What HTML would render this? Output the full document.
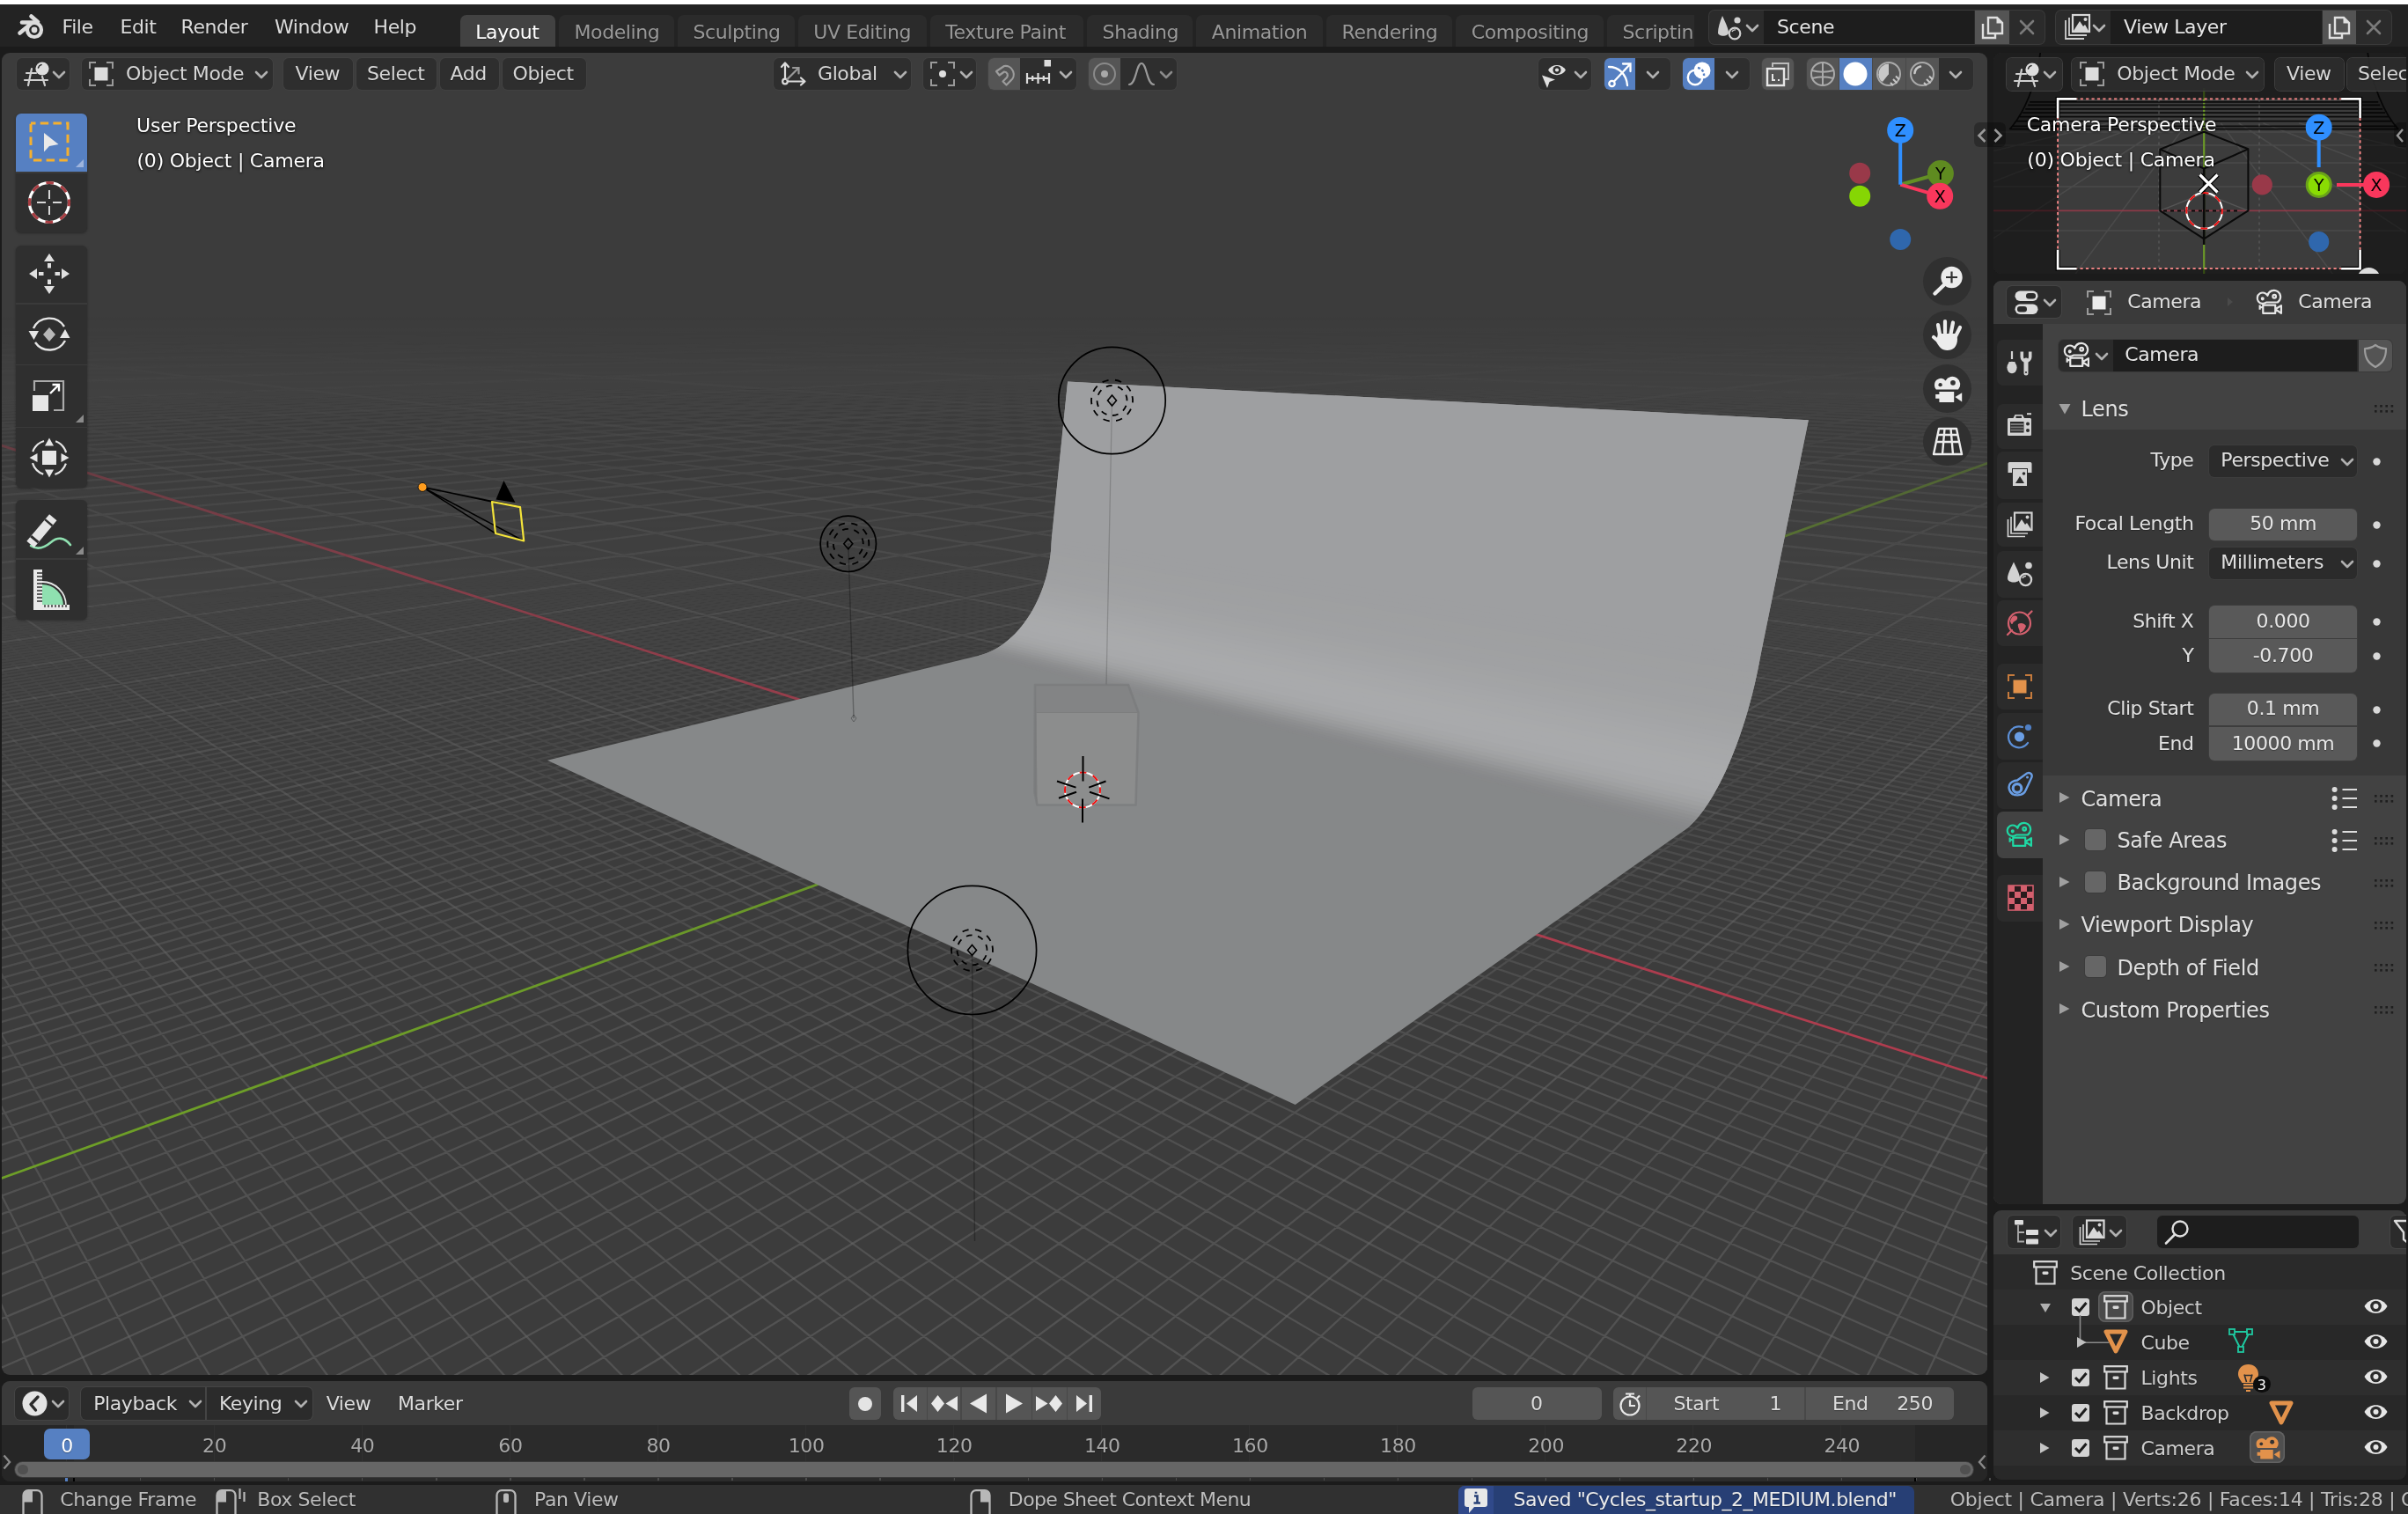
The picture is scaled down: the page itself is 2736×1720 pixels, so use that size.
<!DOCTYPE html>
<html lang="en"><head><meta charset="utf-8"><title>Blender</title>
<style>
html,body{margin:0;padding:0;}
body{width:2736px;height:1720px;overflow:hidden;background:#1b1b1b;position:relative;
 font-family:"DejaVu Sans","Liberation Sans",sans-serif;font-size:22px;letter-spacing:-0.4px;color:#d9d9d9;}
#root{position:absolute;left:0;top:0;width:2736px;height:1720px;overflow:hidden;will-change:transform;transform:translateZ(0);}
.a{position:absolute;}
.t{position:absolute;white-space:nowrap;line-height:26px;text-shadow:0 1px 1px rgba(0,0,0,.35);}
.btn{position:absolute;background:#2d2d2d;border-radius:6px;box-shadow:0 0 0 1px rgba(62,62,62,.9);}
svg{position:absolute;overflow:visible;}
</style>
</head>
<body>
<div id="root">
<div class="a" style="left:0.0px;top:0.0px;width:2736.0px;height:5.0px;background:#ffffff;"></div>
<div class="a" style="left:0.0px;top:5.0px;width:2736.0px;height:48.0px;background:#232323;"></div>
<svg style="left:19.0px;top:15.0px;" width="32" height="32"><g fill="none" stroke="#dcdcdc" stroke-linecap="round">
<path d="M3.5 22.5 L15 13" stroke-width="4.6"/><path d="M6 10.5 L19 10.5" stroke-width="4.6"/><path d="M16.5 3.5 L24 10" stroke-width="4.6"/>
<circle cx="20" cy="19" r="8" stroke-width="4.2"/></g><circle cx="20" cy="19" r="3.4" fill="#dcdcdc"/></svg>
<div class="t" style="left:70.5px;top:17.7px;color:#dcdcdc;">File</div>
<div class="t" style="left:136.5px;top:17.7px;color:#dcdcdc;">Edit</div>
<div class="t" style="left:205.5px;top:17.7px;color:#dcdcdc;">Render</div>
<div class="t" style="left:312.0px;top:17.7px;color:#dcdcdc;">Window</div>
<div class="t" style="left:424.5px;top:17.7px;color:#dcdcdc;">Help</div>
<div class="a" style="left:0;top:5px;width:1925px;height:48px;overflow:hidden">
<div class="a" style="left:522.7px;top:12.0px;width:108.6px;height:36.0px;background:#424242;border-radius:7px 7px 0 0;"></div>
<div class="t" style="left:540.2px;top:19.0px;color:#ffffff;">Layout</div>
<div class="a" style="left:635.0px;top:12.0px;width:131.2px;height:36.0px;background:#2b2b2b;border-radius:7px 7px 0 0;"></div>
<div class="t" style="left:652.5px;top:19.0px;color:#989898;">Modeling</div>
<div class="a" style="left:769.9px;top:12.0px;width:132.9px;height:36.0px;background:#2b2b2b;border-radius:7px 7px 0 0;"></div>
<div class="t" style="left:787.4px;top:19.0px;color:#989898;">Sculpting</div>
<div class="a" style="left:906.8px;top:12.0px;width:146.2px;height:36.0px;background:#2b2b2b;border-radius:7px 7px 0 0;"></div>
<div class="t" style="left:924.3px;top:19.0px;color:#989898;">UV Editing</div>
<div class="a" style="left:1056.8px;top:12.0px;width:174.1px;height:36.0px;background:#2b2b2b;border-radius:7px 7px 0 0;"></div>
<div class="t" style="left:1074.3px;top:19.0px;color:#989898;">Texture Paint</div>
<div class="a" style="left:1235.1px;top:12.0px;width:120.2px;height:36.0px;background:#2b2b2b;border-radius:7px 7px 0 0;"></div>
<div class="t" style="left:1252.6px;top:19.0px;color:#989898;">Shading</div>
<div class="a" style="left:1359.3px;top:12.0px;width:143.5px;height:36.0px;background:#2b2b2b;border-radius:7px 7px 0 0;"></div>
<div class="t" style="left:1376.8px;top:19.0px;color:#989898;">Animation</div>
<div class="a" style="left:1507.0px;top:12.0px;width:142.9px;height:36.0px;background:#2b2b2b;border-radius:7px 7px 0 0;"></div>
<div class="t" style="left:1524.5px;top:19.0px;color:#989898;">Rendering</div>
<div class="a" style="left:1654.2px;top:12.0px;width:167.6px;height:36.0px;background:#2b2b2b;border-radius:7px 7px 0 0;"></div>
<div class="t" style="left:1671.7px;top:19.0px;color:#989898;">Compositing</div>
<div class="a" style="left:1826.0px;top:12.0px;width:134.0px;height:36.0px;background:#2b2b2b;border-radius:7px 7px 0 0;"></div>
<div class="t" style="left:1843.5px;top:19.0px;color:#989898;">Scripting</div>
</div>
<div class="a" style="left:1942.0px;top:12.0px;width:381.0px;height:37.5px;background:#2b2b2b;border-radius:6px;box-shadow:0 0 0 1px #3a3a3a;"></div>
<div class="a" style="left:2004.0px;top:12.0px;width:239.0px;height:37.5px;background:#1d1d1d;"></div>
<div class="a" style="left:2244.0px;top:12.0px;width:39.3px;height:37.5px;background:#545454;"></div>
<div class="t" style="left:2019.0px;top:18.2px;color:#e6e6e6;">Scene</div>
<svg style="left:1948.0px;top:15.0px;" width="32" height="32"><path d="M9 3 C12 10 16 17 16 22 C16 27 4 27 4 22 C4 17 6 10 9 3Z" fill="#d0d0d0"/><circle cx="26" cy="8" r="3.6" fill="#d0d0d0"/><circle cx="23" cy="23" r="6.3" fill="#2b2b2b" stroke="#d0d0d0" stroke-width="2.2"/><path d="M20 21 A3.5 3.5 0 0 1 24 19" stroke="#d0d0d0" stroke-width="1.4" fill="none"/></svg>
<svg style="left:1983.0px;top:26.5px;" width="16" height="10"><path d="M2 2 L8.0 8 L14 2" fill="none" stroke="#b5b5b5" stroke-width="2.6" stroke-linecap="round" stroke-linejoin="round"/></svg>
<svg style="left:2249.7px;top:17.0px;" width="28" height="28"><path d="M3 10 V26 H17 V22" fill="none" stroke="#e0e0e0" stroke-width="2.4"/><path d="M9 3 H19 L25 9 V21 H9 Z" fill="none" stroke="#e0e0e0" stroke-width="2.4"/><path d="M18.5 2.5 V9.5 H25.5 Z" fill="#e0e0e0"/></svg>
<svg style="left:2295.2px;top:23.0px;" width="16" height="16"><path d="M1 1 L15 15 M15 1 L1 15" stroke="#7a7a7a" stroke-width="2.6" stroke-linecap="round"/></svg>
<div class="a" style="left:2335.6px;top:12.0px;width:381.4px;height:37.5px;background:#2b2b2b;border-radius:6px;box-shadow:0 0 0 1px #3a3a3a;"></div>
<div class="a" style="left:2398.0px;top:12.0px;width:239.7px;height:37.5px;background:#1d1d1d;"></div>
<div class="a" style="left:2638.7px;top:12.0px;width:37.9px;height:37.5px;background:#545454;"></div>
<div class="t" style="left:2413.0px;top:18.2px;color:#e6e6e6;">View Layer</div>
<svg style="left:2343.0px;top:15.0px;" width="32" height="32"><path d="M4 8 V29 H25" fill="none" stroke="#cfcfcf" stroke-width="1.8"/><path d="M8 5 V25 H28" fill="none" stroke="#cfcfcf" stroke-width="1.8"/><rect x="12" y="2" width="19" height="19" fill="none" stroke="#d8d8d8" stroke-width="2.2"/><path d="M13 20 L20 9 L24 15 L26 13 L30 20Z" fill="#d8d8d8"/><circle cx="26.5" cy="7" r="2" fill="#d8d8d8"/></svg>
<svg style="left:2377.0px;top:26.5px;" width="16" height="10"><path d="M2 2 L8.0 8 L14 2" fill="none" stroke="#b5b5b5" stroke-width="2.6" stroke-linecap="round" stroke-linejoin="round"/></svg>
<svg style="left:2643.6px;top:17.0px;" width="28" height="28"><path d="M3 10 V26 H17 V22" fill="none" stroke="#e0e0e0" stroke-width="2.4"/><path d="M9 3 H19 L25 9 V21 H9 Z" fill="none" stroke="#e0e0e0" stroke-width="2.4"/><path d="M18.5 2.5 V9.5 H25.5 Z" fill="#e0e0e0"/></svg>
<svg style="left:2688.8px;top:23.0px;" width="16" height="16"><path d="M1 1 L15 15 M15 1 L1 15" stroke="#7a7a7a" stroke-width="2.6" stroke-linecap="round"/></svg>
<div class="a" style="left:2px;top:60px;width:2256px;height:1502px;border-radius:9px;overflow:hidden;background:#3c3c3c;">
<svg style="left:-2px;top:-60px" width="2736" height="1720" viewBox="0 0 2736 1720"><defs><linearGradient id="g0" gradientUnits="userSpaceOnUse" x1="0" y1="344" x2="0" y2="1570"><stop offset="0.0000" stop-color="#fff" stop-opacity="0.000"/><stop offset="0.0457" stop-color="#fff" stop-opacity="0.000"/><stop offset="0.0620" stop-color="#fff" stop-opacity="0.000"/><stop offset="0.0865" stop-color="#fff" stop-opacity="0.000"/><stop offset="0.1109" stop-color="#fff" stop-opacity="0.004"/><stop offset="0.1436" stop-color="#fff" stop-opacity="0.026"/><stop offset="0.1762" stop-color="#fff" stop-opacity="0.061"/><stop offset="0.2088" stop-color="#fff" stop-opacity="0.105"/><stop offset="0.2577" stop-color="#fff" stop-opacity="0.176"/><stop offset="0.3067" stop-color="#fff" stop-opacity="0.248"/><stop offset="0.3719" stop-color="#fff" stop-opacity="0.339"/><stop offset="0.4535" stop-color="#fff" stop-opacity="0.439"/><stop offset="0.5351" stop-color="#fff" stop-opacity="0.522"/><stop offset="0.6574" stop-color="#fff" stop-opacity="0.617"/><stop offset="0.7798" stop-color="#fff" stop-opacity="0.685"/><stop offset="0.9021" stop-color="#fff" stop-opacity="0.733"/><stop offset="1.0000" stop-color="#fff" stop-opacity="0.762"/></linearGradient><linearGradient id="g1" gradientUnits="userSpaceOnUse" x1="0" y1="344" x2="0" y2="1570"><stop offset="0.0000" stop-color="#fff" stop-opacity="0.000"/><stop offset="0.0131" stop-color="#fff" stop-opacity="0.002"/><stop offset="0.0294" stop-color="#fff" stop-opacity="0.026"/><stop offset="0.0457" stop-color="#fff" stop-opacity="0.086"/><stop offset="0.0701" stop-color="#fff" stop-opacity="0.189"/><stop offset="0.0946" stop-color="#fff" stop-opacity="0.249"/><stop offset="0.1272" stop-color="#fff" stop-opacity="0.324"/><stop offset="0.1680" stop-color="#fff" stop-opacity="0.411"/><stop offset="0.2088" stop-color="#fff" stop-opacity="0.490"/><stop offset="0.2577" stop-color="#fff" stop-opacity="0.574"/><stop offset="0.3067" stop-color="#fff" stop-opacity="0.647"/><stop offset="0.3719" stop-color="#fff" stop-opacity="0.729"/><stop offset="0.4535" stop-color="#fff" stop-opacity="0.810"/><stop offset="0.5351" stop-color="#fff" stop-opacity="0.869"/><stop offset="0.6574" stop-color="#fff" stop-opacity="0.928"/><stop offset="0.7798" stop-color="#fff" stop-opacity="0.962"/><stop offset="1.0000" stop-color="#fff" stop-opacity="0.989"/></linearGradient><mask id="m0" maskUnits="userSpaceOnUse" x="0" y="340" width="2300" height="1240"><rect x="0" y="340" width="2300" height="1240" fill="url(#g0)"/></mask><mask id="m1" maskUnits="userSpaceOnUse" x="0" y="340" width="2300" height="1240"><rect x="0" y="340" width="2300" height="1240" fill="url(#g1)"/></mask></defs><g mask="url(#m0)"><path d="M-3.0 470.4L5.7 470.0M-3.0 470.7L12.6 470.0M-3.0 471.0L19.5 470.0M-3.0 471.4L26.4 470.0M-3.0 471.7L33.3 470.0M-3.0 472.0L40.2 470.0M-3.0 472.3L47.1 470.0M-3.0 472.6L54.0 470.0M-3.0 473.0L60.9 470.0M-3.0 473.6L74.7 470.0M-3.0 474.0L81.6 470.0M-3.0 474.3L88.5 470.0M-3.0 474.6L95.4 470.0M-3.0 475.0L102.3 470.0M-3.0 475.3L109.2 470.0M-3.0 475.7L116.1 470.0M-3.0 476.0L123.0 470.0M-3.0 476.3L129.9 470.0M-3.0 477.0L143.8 470.0M-3.0 477.4L150.7 470.0M-3.0 477.7L157.6 470.0M-3.0 478.1L164.5 470.0M-3.0 478.5L171.4 470.0M-3.0 478.8L178.3 470.0M-3.0 479.2L185.2 470.0M-3.0 479.5L192.1 470.0M-3.0 479.9L199.0 470.0M-3.0 480.6L212.8 470.0M-3.0 481.0L219.7 470.0M-3.0 481.4L226.6 470.0M-3.0 481.7L233.5 470.0M-3.0 482.1L240.4 470.0M-3.0 482.5L247.3 470.0M-3.0 482.9L254.2 470.0M-3.0 483.3L261.1 470.0M-3.0 483.6L268.0 470.0M-3.0 484.4L281.8 470.0M-3.0 484.8L288.7 470.0M-3.0 485.2L295.6 470.0M-3.0 485.6L302.5 470.0M-3.0 486.0L309.4 470.0M-3.0 486.4L316.3 470.0M-3.0 486.8L323.2 470.0M-3.0 487.2L330.1 470.0M-3.0 487.6L337.0 470.0M-3.0 488.4L350.8 470.0M-3.0 488.8L357.7 470.0M-3.0 489.3L364.6 470.0M-3.0 489.7L371.5 470.0M-3.0 490.1L378.4 470.0M-3.0 490.5L385.3 470.0M-3.0 490.9L392.2 470.0M-3.0 491.4L399.1 470.0M-3.0 491.8L406.0 470.0M-3.0 492.7L419.8 470.0M-3.0 493.1L426.7 470.0M-3.0 493.6L433.6 470.0M-3.0 494.0L440.5 470.0M-3.0 494.4L447.4 470.0M-3.0 494.9L454.3 470.0M-3.0 495.3L461.2 470.0M-3.0 495.8L468.1 470.0M-3.0 496.3L475.0 470.0M-3.0 497.2L488.8 470.0M-3.0 497.6L495.7 470.0M-3.0 498.1L502.6 470.0M-3.0 498.6L509.5 470.0M-3.0 499.1L516.4 470.0M-3.0 499.5L523.3 470.0M-3.0 500.0L530.2 470.0M-3.0 500.5L537.1 470.0M-3.0 501.0L544.0 470.0M-3.0 502.0L557.8 470.0M-3.0 502.5L564.7 470.0M-3.0 503.0L571.6 470.0M-3.0 503.5L578.5 470.0M-3.0 504.0L585.4 470.0M-3.0 504.5L592.3 470.0M-3.0 505.0L599.2 470.0M-3.0 505.5L606.1 470.0M-3.0 506.0L613.0 470.0M-3.0 507.1L626.8 470.0M-3.0 507.6L633.7 470.0M-3.0 508.1L640.6 470.0M-3.0 508.6L647.5 470.0M-3.0 509.2L654.4 470.0M-3.0 509.7L661.3 470.0M-3.0 510.3L668.2 470.0M-3.0 510.8L675.1 470.0M-3.0 511.4L682.0 470.0M-3.0 512.5L695.8 470.0M-3.0 513.0L702.7 470.0M-3.0 513.6L709.7 470.0M-3.0 514.2L716.6 470.0M-3.0 514.8L723.5 470.0M-3.0 515.3L730.4 470.0M-3.0 515.9L737.3 470.0M-3.0 516.5L744.2 470.0M-3.0 517.1L751.1 470.0M-3.0 518.3L764.9 470.0M-3.0 518.9L771.8 470.0M-3.0 519.5L778.7 470.0M-3.0 520.1L785.6 470.0M-3.0 520.7L792.5 470.0M-3.0 521.3L799.4 470.0M-3.0 522.0L806.3 470.0M-3.0 522.6L813.2 470.0M-3.0 523.2L820.1 470.0M-3.0 524.5L833.9 470.0M-3.0 525.2L840.8 470.0M-3.0 525.8L847.7 470.0M-3.0 526.5L854.6 470.0M-3.0 527.1L861.5 470.0M-3.0 527.8L868.4 470.0M-3.0 528.5L875.3 470.0M-3.0 529.1L882.2 470.0M-3.0 529.8L889.1 470.0M-3.0 531.2L902.9 470.0M-3.0 531.9L909.8 470.0M-3.0 532.6L916.7 470.0M-3.0 533.3L923.6 470.0M-3.0 534.0L930.5 470.0M-3.0 534.7L937.4 470.0M-3.0 535.5L944.3 470.0M-3.0 536.2L951.2 470.0M-3.0 536.9L958.1 470.0M-3.0 538.4L971.9 470.0M-3.0 539.1L978.8 470.0M-3.0 539.9L985.7 470.0M-3.0 540.7L992.6 470.0M-3.0 541.4L999.5 470.0M-3.0 542.2L1006.4 470.0M-3.0 543.0L1013.3 470.0M-3.0 543.8L1020.2 470.0M-3.0 544.6L1027.1 470.0M-3.0 546.2L1040.9 470.0M-3.0 547.0L1047.8 470.0M-3.0 547.8L1054.7 470.0M-3.0 548.6L1061.6 470.0M-3.0 549.5L1068.5 470.0M-3.0 550.3L1075.4 470.0M-3.0 551.1L1082.3 470.0M-3.0 552.0L1089.2 470.0M-3.0 552.9L1096.1 470.0M-3.0 554.6L1109.9 470.0M-3.0 555.5L1116.8 470.0M-3.0 556.4L1123.7 470.0M-3.0 557.3L1130.6 470.0M-3.0 558.2L1137.5 470.0M-3.0 559.1L1144.4 470.0M-3.0 560.0L1151.3 470.0M-3.0 560.9L1158.2 470.0M-3.0 561.9L1165.1 470.0M-3.0 563.8L1178.9 470.0M-3.0 564.7L1185.8 470.0M-3.0 565.7L1192.7 470.0M-3.0 566.7L1199.6 470.0M-3.0 567.6L1206.5 470.0M-3.0 568.6L1213.4 470.0M-3.0 569.6L1220.3 470.0M-3.0 570.7L1227.2 470.0M-3.0 571.7L1234.1 470.0M-3.0 573.7L1247.9 470.0M-3.0 574.8L1254.8 470.0M-3.0 575.9L1261.7 470.0M-3.0 576.9L1268.7 470.0M-3.0 578.0L1275.6 470.0M-3.0 579.1L1282.5 470.0M-3.0 580.2L1289.4 470.0M-3.0 581.3L1296.3 470.0M-3.0 582.4L1303.2 470.0M-3.0 584.7L1317.0 470.0M-3.0 585.8L1323.9 470.0M-3.0 587.0L1330.8 470.0M-3.0 588.2L1337.7 470.0M-3.0 589.4L1344.6 470.0M-3.0 590.6L1351.5 470.0M-3.0 591.8L1358.4 470.0M-3.0 593.0L1365.3 470.0M-3.0 594.2L1372.2 470.0M-3.0 596.7L1386.0 470.0M-3.0 598.0L1392.9 470.0M-3.0 599.3L1399.8 470.0M-3.0 600.6L1406.7 470.0M-3.0 601.9L1413.6 470.0M-3.0 603.2L1420.5 470.0M-3.0 604.6L1427.4 470.0M-3.0 605.9L1434.3 470.0M-3.0 607.3L1441.2 470.0M-3.0 610.1L1455.0 470.0M-3.0 611.5L1461.9 470.0M-3.0 612.9L1468.8 470.0M-3.0 614.3L1475.7 470.0M-3.0 615.8L1482.6 470.0M-3.0 617.3L1489.5 470.0M-3.0 618.7L1496.4 470.0M-3.0 620.2L1503.3 470.0M-3.0 621.8L1510.2 470.0M-3.0 624.9L1524.0 470.0M-3.0 626.4L1530.9 470.0M-3.0 628.0L1537.8 470.0M-3.0 629.6L1544.7 470.0M-3.0 631.2L1551.6 470.0M-3.0 632.9L1558.5 470.0M-3.0 634.5L1565.4 470.0M-3.0 636.2L1572.3 470.0M-3.0 637.9L1579.2 470.0M-3.0 641.4L1593.0 470.0M-3.0 643.2L1599.9 470.0M-3.0 644.9L1606.8 470.0M-3.0 646.7L1613.7 470.0M-3.0 648.6L1620.6 470.0M-3.0 650.4L1627.5 470.0M-3.0 652.3L1634.4 470.0M-3.0 654.2L1641.3 470.0M-3.0 656.1L1648.2 470.0M-3.0 660.0L1662.0 470.0M-3.0 662.0L1668.9 470.0M-3.0 664.0L1675.8 470.0M-3.0 666.1L1682.7 470.0M-3.0 668.1L1689.6 470.0M-3.0 670.2L1696.5 470.0M-3.0 672.3L1703.4 470.0M-3.0 674.5L1710.3 470.0M-3.0 676.7L1717.2 470.0M-3.0 681.1L1731.0 470.0M-3.0 683.4L1737.9 470.0M-3.0 685.7L1744.8 470.0M-3.0 688.0L1751.7 470.0M-3.0 690.4L1758.6 470.0M-3.0 692.8L1765.5 470.0M-3.0 695.2L1772.4 470.0M-3.0 697.6L1779.3 470.0M-3.0 700.1L1786.2 470.0M-3.0 705.2L1800.0 470.0M-3.0 707.8L1806.9 470.0M-3.0 710.5L1813.8 470.0M-3.0 713.2L1820.7 470.0M-3.0 715.9L1827.6 470.0M-3.0 718.6L1834.6 470.0M-3.0 721.5L1841.5 470.0M-3.0 724.3L1848.4 470.0M-3.0 727.2L1855.3 470.0M-3.0 733.1L1869.1 470.0M-3.0 736.1L1876.0 470.0M-3.0 739.2L1882.9 470.0M-3.0 742.3L1889.8 470.0M-3.0 745.5L1896.7 470.0M-3.0 748.7L1903.6 470.0M-3.0 752.0L1910.5 470.0M-3.0 755.3L1917.4 470.0M-3.0 758.7L1924.3 470.0M-3.0 765.6L1938.1 470.0M-3.0 769.2L1945.0 470.0M-3.0 772.8L1951.9 470.0M-3.0 776.4L1958.8 470.0M-3.0 780.2L1965.7 470.0M-3.0 784.0L1972.6 470.0M-3.0 787.9L1979.5 470.0M-3.0 791.8L1986.4 470.0M-3.0 795.8L1993.3 470.0M-3.0 804.0L2007.1 470.0M-3.0 808.3L2014.0 470.0M-3.0 812.6L2020.9 470.0M-3.0 817.0L2027.8 470.0M-3.0 821.5L2034.7 470.0M-3.0 826.0L2041.6 470.0M-3.0 830.7L2048.5 470.0M-3.0 835.4L2055.4 470.0M-3.0 840.2L2062.3 470.0M-3.0 850.2L2076.1 470.0M-3.0 855.3L2083.0 470.0M-3.0 860.6L2089.9 470.0M-3.0 865.9L2096.8 470.0M-3.0 871.4L2103.7 470.0M-3.0 876.9L2110.6 470.0M-3.0 882.6L2117.5 470.0M-3.0 888.5L2124.4 470.0M-3.0 894.4L2131.3 470.0M-3.0 906.7L2145.1 470.0M-3.0 913.0L2152.0 470.0M-3.0 919.5L2158.9 470.0M-3.0 926.2L2165.8 470.0M-3.0 933.0L2172.7 470.0M-3.0 939.9L2179.6 470.0M-3.0 947.0L2186.5 470.0M-3.0 954.3L2193.4 470.0M-3.0 961.8L2200.3 470.0M-3.0 977.3L2214.1 470.0M-3.0 985.4L2221.0 470.0M-3.0 993.6L2227.9 470.0M-3.0 1002.1L2234.8 470.0M-3.0 1010.8L2241.7 470.0M-3.0 1019.8L2248.6 470.0M-3.0 1028.9L2255.5 470.0M-3.0 1038.4L2262.4 470.0M-3.0 1048.1L2263.0 471.6M-3.0 1068.3L2263.0 475.3M-3.0 1078.8L2263.0 477.2M-3.0 1089.7L2263.0 479.1M-3.0 1100.9L2263.0 481.2M-3.0 1112.4L2263.0 483.3M-3.0 1124.3L2263.0 485.4M-3.0 1136.6L2263.0 487.6M-3.0 1149.3L2263.0 489.9M-3.0 1162.3L2263.0 492.3M-3.0 1189.8L2263.0 497.2M-3.0 1204.2L2263.0 499.9M-3.0 1219.1L2263.0 502.6M-3.0 1234.6L2263.0 505.4M-3.0 1250.6L2263.0 508.2M-3.0 1267.2L2263.0 511.3M-3.0 1284.4L2263.0 514.4M-3.0 1302.3L2263.0 517.6M-3.0 1320.9L2263.0 521.0M-3.0 1360.3L2263.0 528.1M-3.0 1381.2L2263.0 531.9M-3.0 1403.0L2263.0 535.8M-3.0 1425.7L2263.0 539.9M-3.0 1449.4L2263.0 544.2M-3.0 1474.2L2263.0 548.7M-3.0 1500.1L2263.0 553.4M-3.0 1527.3L2263.0 558.3M-3.0 1555.7L2263.0 563.4M105.5 1567.0L2263.0 574.5M172.6 1567.0L2263.0 580.5M239.7 1567.0L2263.0 586.7M306.9 1567.0L2263.0 593.4M374.0 1567.0L2263.0 600.4M441.2 1567.0L2263.0 607.8M508.3 1567.0L2263.0 615.6M575.4 1567.0L2263.0 623.9M642.6 1567.0L2263.0 632.8M776.8 1567.0L2263.0 652.3M844.0 1567.0L2263.0 663.1M911.1 1567.0L2263.0 674.6M978.2 1567.0L2263.0 687.0M1045.4 1567.0L2263.0 700.4M1112.5 1567.0L2263.0 714.9M1179.6 1567.0L2263.0 730.6M1246.8 1567.0L2263.0 747.7M1313.9 1567.0L2263.0 766.4M1448.2 1567.0L2263.0 809.5M1515.3 1567.0L2263.0 834.5M1582.5 1567.0L2263.0 862.4M1649.6 1567.0L2263.0 893.6M1716.7 1567.0L2263.0 928.9M1783.9 1567.0L2263.0 968.9M1851.0 1567.0L2263.0 1014.9M1918.1 1567.0L2263.0 1068.1M1985.3 1567.0L2263.0 1130.6M2119.5 1567.0L2263.0 1294.6M2186.7 1567.0L2263.0 1405.2M2253.8 1567.0L2263.0 1545.0M-3.0 1472.0L39.4 1567.0M-3.0 1348.3L106.6 1567.0M-3.0 1249.1L173.7 1567.0M-3.0 1167.7L240.9 1567.0M-3.0 1099.7L308.1 1567.0M-3.0 1042.2L375.3 1567.0M-3.0 992.7L442.5 1567.0M-3.0 949.8L509.7 1567.0M-3.0 912.3L576.9 1567.0M-3.0 849.6L711.3 1567.0M-3.0 823.1L778.5 1567.0M-3.0 799.3L845.6 1567.0M-3.0 777.8L912.8 1567.0M-3.0 758.2L980.0 1567.0M-3.0 740.3L1047.2 1567.0M-3.0 723.9L1114.4 1567.0M-3.0 708.8L1181.6 1567.0M-3.0 694.8L1248.8 1567.0M-3.0 669.9L1383.2 1567.0M-3.0 658.7L1450.3 1567.0M-3.0 648.2L1517.5 1567.0M-3.0 638.5L1584.7 1567.0M-3.0 629.3L1651.9 1567.0M-3.0 620.7L1719.1 1567.0M-3.0 612.6L1786.3 1567.0M-3.0 605.0L1853.5 1567.0M-3.0 597.8L1920.7 1567.0M-3.0 584.5L2055.1 1567.0M-3.0 578.3L2122.2 1567.0M-3.0 572.5L2189.4 1567.0M-3.0 566.9L2256.6 1567.0M-3.0 561.7L2263.0 1540.7M-3.0 556.6L2263.0 1513.0M-3.0 551.8L2263.0 1486.5M-3.0 547.2L2263.0 1461.2M-3.0 542.8L2263.0 1437.0M-3.0 534.5L2263.0 1391.5M-3.0 530.7L2263.0 1370.2M-3.0 527.0L2263.0 1349.7M-3.0 523.4L2263.0 1330.1M-3.0 519.9L2263.0 1311.2M-3.0 516.6L2263.0 1293.0M-3.0 513.5L2263.0 1275.4M-3.0 510.4L2263.0 1258.5M-3.0 507.4L2263.0 1242.2M-3.0 501.8L2263.0 1211.3M-3.0 499.2L2263.0 1196.7M-3.0 496.6L2263.0 1182.5M-3.0 494.1L2263.0 1168.8M-3.0 491.7L2263.0 1155.5M-3.0 489.3L2263.0 1142.7M-3.0 487.1L2263.0 1130.2M-3.0 484.9L2263.0 1118.1M-3.0 482.8L2263.0 1106.4M-3.0 478.7L2263.0 1084.1M-3.0 476.7L2263.0 1073.4M-3.0 474.9L2263.0 1063.0M-3.0 473.0L2263.0 1052.9M-3.0 471.2L2263.0 1043.0M-1.0 470.0L2263.0 1033.5M5.9 470.0L2263.0 1024.2M12.8 470.0L2263.0 1015.1M19.7 470.0L2263.0 1006.3M33.5 470.0L2263.0 989.4M40.4 470.0L2263.0 981.2M47.3 470.0L2263.0 973.3M54.2 470.0L2263.0 965.5M61.2 470.0L2263.0 957.9M68.1 470.0L2263.0 950.6M75.0 470.0L2263.0 943.4M81.9 470.0L2263.0 936.3M88.8 470.0L2263.0 929.4M102.6 470.0L2263.0 916.2M109.5 470.0L2263.0 909.7M116.4 470.0L2263.0 903.5M123.3 470.0L2263.0 897.3M130.2 470.0L2263.0 891.3M137.1 470.0L2263.0 885.5M144.0 470.0L2263.0 879.7M150.9 470.0L2263.0 874.1M157.8 470.0L2263.0 868.6M171.7 470.0L2263.0 857.9M178.6 470.0L2263.0 852.7M185.5 470.0L2263.0 847.6M192.4 470.0L2263.0 842.6M199.3 470.0L2263.0 837.8M206.2 470.0L2263.0 833.0M213.1 470.0L2263.0 828.3M220.0 470.0L2263.0 823.7M226.9 470.0L2263.0 819.2M240.7 470.0L2263.0 810.4M247.6 470.0L2263.0 806.1M254.5 470.0L2263.0 801.9M261.4 470.0L2263.0 797.8M268.4 470.0L2263.0 793.7M275.3 470.0L2263.0 789.8M282.2 470.0L2263.0 785.9M289.1 470.0L2263.0 782.0M296.0 470.0L2263.0 778.3M309.8 470.0L2263.0 770.9M316.7 470.0L2263.0 767.3M323.6 470.0L2263.0 763.8M330.5 470.0L2263.0 760.4M337.4 470.0L2263.0 756.9M344.3 470.0L2263.0 753.6M351.2 470.0L2263.0 750.3M358.1 470.0L2263.0 747.1M365.0 470.0L2263.0 743.9M378.9 470.0L2263.0 737.6M385.8 470.0L2263.0 734.6M392.7 470.0L2263.0 731.6M399.6 470.0L2263.0 728.6M406.5 470.0L2263.0 725.7M413.4 470.0L2263.0 722.8M420.3 470.0L2263.0 720.0M427.2 470.0L2263.0 717.2M434.1 470.0L2263.0 714.5M447.9 470.0L2263.0 709.1M454.8 470.0L2263.0 706.5M461.7 470.0L2263.0 703.9M468.7 470.0L2263.0 701.4M475.6 470.0L2263.0 698.9M482.5 470.0L2263.0 696.4M489.4 470.0L2263.0 694.0M496.3 470.0L2263.0 691.5M503.2 470.0L2263.0 689.2M517.0 470.0L2263.0 684.5M523.9 470.0L2263.0 682.2M530.8 470.0L2263.0 680.0M537.7 470.0L2263.0 677.8M544.6 470.0L2263.0 675.6M551.5 470.0L2263.0 673.4M558.4 470.0L2263.0 671.3M565.3 470.0L2263.0 669.2M572.3 470.0L2263.0 667.1M586.1 470.0L2263.0 663.0M593.0 470.0L2263.0 661.0M599.9 470.0L2263.0 659.0M606.8 470.0L2263.0 657.1M613.7 470.0L2263.0 655.1M620.6 470.0L2263.0 653.2M627.5 470.0L2263.0 651.3M634.4 470.0L2263.0 649.5M641.3 470.0L2263.0 647.6M655.1 470.0L2263.0 644.0M662.0 470.0L2263.0 642.3M668.9 470.0L2263.0 640.5M675.9 470.0L2263.0 638.8M682.8 470.0L2263.0 637.1M689.7 470.0L2263.0 635.4M696.6 470.0L2263.0 633.7M703.5 470.0L2263.0 632.1M710.4 470.0L2263.0 630.4M724.2 470.0L2263.0 627.2M731.1 470.0L2263.0 625.6M738.0 470.0L2263.0 624.1M744.9 470.0L2263.0 622.5M751.8 470.0L2263.0 621.0M758.7 470.0L2263.0 619.5M765.6 470.0L2263.0 618.0M772.5 470.0L2263.0 616.5M779.5 470.0L2263.0 615.1M793.3 470.0L2263.0 612.2M800.2 470.0L2263.0 610.8M807.1 470.0L2263.0 609.4M814.0 470.0L2263.0 608.0M820.9 470.0L2263.0 606.6M827.8 470.0L2263.0 605.2M834.7 470.0L2263.0 603.9M841.6 470.0L2263.0 602.6M848.5 470.0L2263.0 601.2M862.3 470.0L2263.0 598.7M869.2 470.0L2263.0 597.4M876.1 470.0L2263.0 596.1M883.1 470.0L2263.0 594.9M890.0 470.0L2263.0 593.6M896.9 470.0L2263.0 592.4M903.8 470.0L2263.0 591.2M910.7 470.0L2263.0 590.0M917.6 470.0L2263.0 588.8M931.4 470.0L2263.0 586.4M938.3 470.0L2263.0 585.3M945.2 470.0L2263.0 584.1M952.1 470.0L2263.0 583.0M959.0 470.0L2263.0 581.9M965.9 470.0L2263.0 580.8M972.8 470.0L2263.0 579.6M979.8 470.0L2263.0 578.6M986.7 470.0L2263.0 577.5M1000.5 470.0L2263.0 575.3M1007.4 470.0L2263.0 574.3M1014.3 470.0L2263.0 573.2M1021.2 470.0L2263.0 572.2M1028.1 470.0L2263.0 571.2M1035.0 470.0L2263.0 570.2M1041.9 470.0L2263.0 569.1M1048.8 470.0L2263.0 568.1M1055.7 470.0L2263.0 567.2M1069.5 470.0L2263.0 565.2M1076.4 470.0L2263.0 564.2M1083.4 470.0L2263.0 563.3M1090.3 470.0L2263.0 562.3M1097.2 470.0L2263.0 561.4M1104.1 470.0L2263.0 560.5M1111.0 470.0L2263.0 559.5M1117.9 470.0L2263.0 558.6M1124.8 470.0L2263.0 557.7M1138.6 470.0L2263.0 555.9M1145.5 470.0L2263.0 555.0M1152.4 470.0L2263.0 554.2M1159.3 470.0L2263.0 553.3M1166.2 470.0L2263.0 552.4M1173.1 470.0L2263.0 551.6M1180.0 470.0L2263.0 550.7M1187.0 470.0L2263.0 549.9M1193.9 470.0L2263.0 549.1M1207.7 470.0L2263.0 547.4M1214.6 470.0L2263.0 546.6M1221.5 470.0L2263.0 545.8M1228.4 470.0L2263.0 545.0M1235.3 470.0L2263.0 544.2M1242.2 470.0L2263.0 543.4M1249.1 470.0L2263.0 542.6M1256.0 470.0L2263.0 541.8M1262.9 470.0L2263.0 541.1M1276.7 470.0L2263.0 539.5M1283.6 470.0L2263.0 538.8M1290.6 470.0L2263.0 538.0M1297.5 470.0L2263.0 537.3M1304.4 470.0L2263.0 536.6M1311.3 470.0L2263.0 535.8M1318.2 470.0L2263.0 535.1M1325.1 470.0L2263.0 534.4M1332.0 470.0L2263.0 533.7M1345.8 470.0L2263.0 532.3M1352.7 470.0L2263.0 531.6M1359.6 470.0L2263.0 530.9M1366.5 470.0L2263.0 530.2M1373.4 470.0L2263.0 529.5M1380.3 470.0L2263.0 528.8M1387.2 470.0L2263.0 528.1M1394.2 470.0L2263.0 527.5M1401.1 470.0L2263.0 526.8M1414.9 470.0L2263.0 525.5M1421.8 470.0L2263.0 524.8M1428.7 470.0L2263.0 524.2M1435.6 470.0L2263.0 523.6M1442.5 470.0L2263.0 522.9M1449.4 470.0L2263.0 522.3M1456.3 470.0L2263.0 521.7M1463.2 470.0L2263.0 521.0M1470.1 470.0L2263.0 520.4M1483.9 470.0L2263.0 519.2M1490.9 470.0L2263.0 518.6M1497.8 470.0L2263.0 518.0M1504.7 470.0L2263.0 517.4M1511.6 470.0L2263.0 516.8M1518.5 470.0L2263.0 516.2M1525.4 470.0L2263.0 515.6M1532.3 470.0L2263.0 515.1M1539.2 470.0L2263.0 514.5M1553.0 470.0L2263.0 513.3M1559.9 470.0L2263.0 512.8M1566.8 470.0L2263.0 512.2M1573.7 470.0L2263.0 511.7M1580.6 470.0L2263.0 511.1M1587.5 470.0L2263.0 510.6M1594.5 470.0L2263.0 510.0M1601.4 470.0L2263.0 509.5M1608.3 470.0L2263.0 508.9M1622.1 470.0L2263.0 507.9M1629.0 470.0L2263.0 507.3M1635.9 470.0L2263.0 506.8M1642.8 470.0L2263.0 506.3M1649.7 470.0L2263.0 505.8M1656.6 470.0L2263.0 505.2M1663.5 470.0L2263.0 504.7M1670.4 470.0L2263.0 504.2M1677.3 470.0L2263.0 503.7M1691.1 470.0L2263.0 502.7M1698.1 470.0L2263.0 502.2M1705.0 470.0L2263.0 501.7M1711.9 470.0L2263.0 501.2M1718.8 470.0L2263.0 500.7M1725.7 470.0L2263.0 500.3M1732.6 470.0L2263.0 499.8M1739.5 470.0L2263.0 499.3M1746.4 470.0L2263.0 498.8M1760.2 470.0L2263.0 497.9M1767.1 470.0L2263.0 497.4M1774.0 470.0L2263.0 497.0M1780.9 470.0L2263.0 496.5M1787.8 470.0L2263.0 496.0M1794.7 470.0L2263.0 495.6M1801.7 470.0L2263.0 495.1M1808.6 470.0L2263.0 494.7M1815.5 470.0L2263.0 494.2M1829.3 470.0L2263.0 493.3M1836.2 470.0L2263.0 492.9M1843.1 470.0L2263.0 492.5M1850.0 470.0L2263.0 492.0M1856.9 470.0L2263.0 491.6M1863.8 470.0L2263.0 491.2M1870.7 470.0L2263.0 490.7M1877.6 470.0L2263.0 490.3M1884.5 470.0L2263.0 489.9M1898.4 470.0L2263.0 489.1M1905.3 470.0L2263.0 488.6M1912.2 470.0L2263.0 488.2M1919.1 470.0L2263.0 487.8M1926.0 470.0L2263.0 487.4M1932.9 470.0L2263.0 487.0M1939.8 470.0L2263.0 486.6M1946.7 470.0L2263.0 486.2M1953.6 470.0L2263.0 485.8M1967.4 470.0L2263.0 485.0M1974.3 470.0L2263.0 484.6M1981.2 470.0L2263.0 484.2M1988.1 470.0L2263.0 483.9M1995.0 470.0L2263.0 483.5M2002.0 470.0L2263.0 483.1M2008.9 470.0L2263.0 482.7M2015.8 470.0L2263.0 482.3M2022.7 470.0L2263.0 481.9M2036.5 470.0L2263.0 481.2M2043.4 470.0L2263.0 480.8M2050.3 470.0L2263.0 480.5M2057.2 470.0L2263.0 480.1M2064.1 470.0L2263.0 479.7M2071.0 470.0L2263.0 479.4M2077.9 470.0L2263.0 479.0M2084.8 470.0L2263.0 478.6M2091.7 470.0L2263.0 478.3M2105.6 470.0L2263.0 477.6M2112.5 470.0L2263.0 477.2M2119.4 470.0L2263.0 476.9M2126.3 470.0L2263.0 476.5M2133.2 470.0L2263.0 476.2M2140.1 470.0L2263.0 475.8M2147.0 470.0L2263.0 475.5M2153.9 470.0L2263.0 475.2M2160.8 470.0L2263.0 474.8M2174.6 470.0L2263.0 474.1M2181.5 470.0L2263.0 473.8M2188.4 470.0L2263.0 473.5M2195.3 470.0L2263.0 473.1M2202.2 470.0L2263.0 472.8M2209.2 470.0L2263.0 472.5M2216.1 470.0L2263.0 472.2M2223.0 470.0L2263.0 471.8M2229.9 470.0L2263.0 471.5M2243.7 470.0L2263.0 470.9M2250.6 470.0L2263.0 470.6M2257.5 470.0L2263.0 470.3" stroke="#626262" stroke-opacity=".8" stroke-width="2.3" fill="none"/></g><g mask="url(#m1)"><path d="M-3.0 358.0L-2.6 358.0M-3.0 358.0L5.0 358.0M-3.0 358.1L12.5 358.0M-3.0 358.2L27.5 358.0M-3.0 358.2L35.0 358.0M-3.0 358.2L42.5 358.0M-3.0 358.3L50.0 358.0M-3.0 358.3L57.6 358.0M-3.0 358.3L65.1 358.0M-3.0 358.4L72.6 358.0M-3.0 358.4L80.1 358.0M-3.0 358.5L87.6 358.0M-3.0 358.5L102.7 358.0M-3.0 358.6L110.2 358.0M-3.0 358.6L117.7 358.0M-3.0 358.7L125.2 358.0M-3.0 358.7L132.7 358.0M-3.0 358.7L140.2 358.0M-3.0 358.8L147.7 358.0M-3.0 358.8L155.3 358.0M-3.0 358.9L162.8 358.0M-3.0 359.0L177.8 358.0M-3.0 359.0L185.3 358.0M-3.0 359.0L192.8 358.0M-3.0 359.1L200.3 358.0M-3.0 359.1L207.9 358.0M-3.0 359.2L215.4 358.0M-3.0 359.2L222.9 358.0M-3.0 359.3L230.4 358.0M-3.0 359.3L237.9 358.0M-3.0 359.4L253.0 358.0M-3.0 359.4L260.5 358.0M-3.0 359.5L268.0 358.0M-3.0 359.5L275.5 358.0M-3.0 359.6L283.0 358.0M-3.0 359.6L290.5 358.0M-3.0 359.7L298.0 358.0M-3.0 359.7L305.6 358.0M-3.0 359.8L313.1 358.0M-3.0 359.9L328.1 358.0M-3.0 359.9L335.6 358.0M-3.0 360.0L343.1 358.0M-3.0 360.0L350.6 358.0M-3.0 360.1L358.2 358.0M-3.0 360.1L365.7 358.0M-3.0 360.2L373.2 358.0M-3.0 360.2L380.7 358.0M-3.0 360.3L388.2 358.0M-3.0 360.4L403.3 358.0M-3.0 360.4L410.8 358.0M-3.0 360.5L418.3 358.0M-3.0 360.5L425.8 358.0M-3.0 360.6L433.3 358.0M-3.0 360.6L440.8 358.0M-3.0 360.7L448.3 358.0M-3.0 360.7L455.9 358.0M-3.0 360.8L463.4 358.0M-3.0 360.9L478.4 358.0M-3.0 360.9L485.9 358.0M-3.0 361.0L493.4 358.0M-3.0 361.0L500.9 358.0M-3.0 361.1L508.5 358.0M-3.0 361.2L516.0 358.0M-3.0 361.2L523.5 358.0M-3.0 361.3L531.0 358.0M-3.0 361.3L538.5 358.0M-3.0 361.4L553.6 358.0M-3.0 361.5L561.1 358.0M-3.0 361.6L568.6 358.0M-3.0 361.6L576.1 358.0M-3.0 361.7L583.6 358.0M-3.0 361.7L591.1 358.0M-3.0 361.8L598.6 358.0M-3.0 361.9L606.2 358.0M-3.0 361.9L613.7 358.0M-3.0 362.1L628.7 358.0M-3.0 362.1L636.2 358.0M-3.0 362.2L643.7 358.0M-3.0 362.2L651.2 358.0M-3.0 362.3L658.8 358.0M-3.0 362.4L666.3 358.0M-3.0 362.4L673.8 358.0M-3.0 362.5L681.3 358.0M-3.0 362.6L688.8 358.0M-3.0 362.7L703.8 358.0M-3.0 362.8L711.4 358.0M-3.0 362.8L718.9 358.0M-3.0 362.9L726.4 358.0M-3.0 363.0L733.9 358.0M-3.0 363.0L741.4 358.0M-3.0 363.1L748.9 358.0M-3.0 363.2L756.5 358.0M-3.0 363.3L764.0 358.0M-3.0 363.4L779.0 358.0M-3.0 363.5L786.5 358.0M-3.0 363.5L794.0 358.0M-3.0 363.6L801.5 358.0M-3.0 363.7L809.1 358.0M-3.0 363.8L816.6 358.0M-3.0 363.8L824.1 358.0M-3.0 363.9L831.6 358.0M-3.0 364.0L839.1 358.0M-3.0 364.1L854.1 358.0M-3.0 364.2L861.7 358.0M-3.0 364.3L869.2 358.0M-3.0 364.4L876.7 358.0M-3.0 364.5L884.2 358.0M-3.0 364.5L891.7 358.0M-3.0 364.6L899.2 358.0M-3.0 364.7L906.8 358.0M-3.0 364.8L914.3 358.0M-3.0 365.0L929.3 358.0M-3.0 365.0L936.8 358.0M-3.0 365.1L944.3 358.0M-3.0 365.2L951.8 358.0M-3.0 365.3L959.4 358.0M-3.0 365.4L966.9 358.0M-3.0 365.5L974.4 358.0M-3.0 365.6L981.9 358.0M-3.0 365.7L989.4 358.0M-3.0 365.8L1004.4 358.0M-3.0 365.9L1012.0 358.0M-3.0 366.0L1019.5 358.0M-3.0 366.1L1027.0 358.0M-3.0 366.2L1034.5 358.0M-3.0 366.3L1042.0 358.0M-3.0 366.4L1049.5 358.0M-3.0 366.5L1057.1 358.0M-3.0 366.6L1064.6 358.0M-3.0 366.8L1079.6 358.0M-3.0 366.9L1087.1 358.0M-3.0 367.0L1094.6 358.0M-3.0 367.1L1102.1 358.0M-3.0 367.2L1109.7 358.0M-3.0 367.3L1117.2 358.0M-3.0 367.4L1124.7 358.0M-3.0 367.5L1132.2 358.0M-3.0 367.6L1139.7 358.0M-3.0 367.9L1154.7 358.0M-3.0 368.0L1162.3 358.0M-3.0 368.1L1169.8 358.0M-3.0 368.2L1177.3 358.0M-3.0 368.3L1184.8 358.0M-3.0 368.4L1192.3 358.0M-3.0 368.5L1199.8 358.0M-3.0 368.6L1207.4 358.0M-3.0 368.8L1214.9 358.0M-3.0 369.0L1229.9 358.0M-3.0 369.1L1237.4 358.0M-3.0 369.2L1244.9 358.0M-3.0 369.4L1252.4 358.0M-3.0 369.5L1260.0 358.0M-3.0 369.6L1267.5 358.0M-3.0 369.8L1275.0 358.0M-3.0 369.9L1282.5 358.0M-3.0 370.0L1290.0 358.0M-3.0 370.3L1305.0 358.0M-3.0 370.4L1312.6 358.0M-3.0 370.5L1320.1 358.0M-3.0 370.7L1327.6 358.0M-3.0 370.8L1335.1 358.0M-3.0 371.0L1342.6 358.0M-3.0 371.1L1350.1 358.0M-3.0 371.2L1357.6 358.0M-3.0 371.4L1365.2 358.0M-3.0 371.7L1380.2 358.0M-3.0 371.8L1387.7 358.0M-3.0 372.0L1395.2 358.0M-3.0 372.1L1402.7 358.0M-3.0 372.3L1410.3 358.0M-3.0 372.5L1417.8 358.0M-3.0 372.6L1425.3 358.0M-3.0 372.8L1432.8 358.0M-3.0 372.9L1440.3 358.0M-3.0 373.3L1455.3 358.0M-3.0 373.4L1462.9 358.0M-3.0 373.6L1470.4 358.0M-3.0 373.8L1477.9 358.0M-3.0 373.9L1485.4 358.0M-3.0 374.1L1492.9 358.0M-3.0 374.3L1500.4 358.0M-3.0 374.5L1507.9 358.0M-3.0 374.7L1515.5 358.0M-3.0 375.0L1530.5 358.0M-3.0 375.2L1538.0 358.0M-3.0 375.4L1545.5 358.0M-3.0 375.6L1553.0 358.0M-3.0 375.8L1560.6 358.0M-3.0 376.0L1568.1 358.0M-3.0 376.2L1575.6 358.0M-3.0 376.4L1583.1 358.0M-3.0 376.6L1590.6 358.0M-3.0 377.0L1605.6 358.0M-3.0 377.2L1613.2 358.0M-3.0 377.4L1620.7 358.0M-3.0 377.7L1628.2 358.0M-3.0 377.9L1635.7 358.0M-3.0 378.1L1643.2 358.0M-3.0 378.3L1650.7 358.0M-3.0 378.6L1658.2 358.0M-3.0 378.8L1665.8 358.0M-3.0 379.3L1680.8 358.0M-3.0 379.5L1688.3 358.0M-3.0 379.8L1695.8 358.0M-3.0 380.0L1703.3 358.0M-3.0 380.3L1710.9 358.0M-3.0 380.5L1718.4 358.0M-3.0 380.8L1725.9 358.0M-3.0 381.1L1733.4 358.0M-3.0 381.3L1740.9 358.0M-3.0 381.9L1755.9 358.0M-3.0 382.2L1763.5 358.0M-3.0 382.5L1771.0 358.0M-3.0 382.8L1778.5 358.0M-3.0 383.1L1786.0 358.0M-3.0 383.4L1793.5 358.0M-3.0 383.7L1801.0 358.0M-3.0 384.0L1808.5 358.0M-3.0 384.3L1816.1 358.0M-3.0 384.9L1831.1 358.0M-3.0 385.3L1838.6 358.0M-3.0 385.6L1846.1 358.0M-3.0 385.9L1853.6 358.0M-3.0 386.3L1861.2 358.0M-3.0 386.6L1868.7 358.0M-3.0 387.0L1876.2 358.0M-3.0 387.4L1883.7 358.0M-3.0 387.7L1891.2 358.0M-3.0 388.5L1906.2 358.0M-3.0 388.9L1913.8 358.0M-3.0 389.3L1921.3 358.0M-3.0 389.7L1928.8 358.0M-3.0 390.1L1936.3 358.0M-3.0 390.5L1943.8 358.0M-3.0 390.9L1951.3 358.0M-3.0 391.4L1958.8 358.0M-3.0 391.8L1966.4 358.0M-3.0 392.7L1981.4 358.0M-3.0 393.2L1988.9 358.0M-3.0 393.7L1996.4 358.0M-3.0 394.2L2003.9 358.0M-3.0 394.7L2011.4 358.0M-3.0 395.2L2019.0 358.0M-3.0 395.7L2026.5 358.0M-3.0 396.2L2034.0 358.0M-3.0 396.8L2041.5 358.0M-3.0 397.9L2056.5 358.0M-3.0 398.5L2064.1 358.0M-3.0 399.0L2071.6 358.0M-3.0 399.6L2079.1 358.0M-3.0 400.3L2086.6 358.0M-3.0 400.9L2094.1 358.0M-3.0 401.5L2101.6 358.0M-3.0 402.2L2109.1 358.0M-3.0 402.9L2116.7 358.0M-3.0 404.3L2131.7 358.0M-3.0 405.0L2139.2 358.0M-3.0 405.7L2146.7 358.0M-3.0 406.5L2154.2 358.0M-3.0 407.2L2161.7 358.0M-3.0 408.0L2169.3 358.0M-3.0 408.9L2176.8 358.0M-3.0 409.7L2184.3 358.0M-3.0 410.6L2191.8 358.0M-3.0 412.3L2206.8 358.0M-3.0 413.3L2214.4 358.0M-3.0 414.2L2221.9 358.0M-3.0 415.2L2229.4 358.0M-3.0 416.2L2236.9 358.0M-3.0 417.3L2244.4 358.0M-3.0 418.3L2251.9 358.0M-3.0 419.4L2259.4 358.0M-3.0 420.6L2263.0 358.1M-3.0 423.0L2263.0 358.5M-3.0 424.2L2263.0 358.8M-3.0 425.5L2263.0 359.0M-3.0 426.8L2263.0 359.2M-3.0 428.2L2263.0 359.5M-3.0 429.6L2263.0 359.7M-3.0 431.1L2263.0 360.0M-3.0 432.6L2263.0 360.3M-3.0 434.2L2263.0 360.6M-3.0 437.5L2263.0 361.2M-3.0 439.3L2263.0 361.5M-3.0 441.1L2263.0 361.8M-3.0 443.0L2263.0 362.2M-3.0 445.0L2263.0 362.5M-3.0 447.0L2263.0 362.9M-3.0 449.1L2263.0 363.3M-3.0 451.4L2263.0 363.7M-3.0 453.7L2263.0 364.1M-3.0 458.7L2263.0 365.0M-3.0 461.3L2263.0 365.5M-3.0 464.1L2263.0 366.0M-3.0 467.0L2263.0 366.5M-3.0 470.1L2263.0 367.1M-3.0 473.3L2263.0 367.6M-3.0 476.7L2263.0 368.3M-3.0 480.3L2263.0 368.9M-3.0 484.0L2263.0 369.6M-3.0 492.2L2263.0 371.1M-3.0 496.7L2263.0 371.9M-3.0 501.5L2263.0 372.7M-3.0 506.5L2263.0 373.7M-3.0 511.9L2263.0 374.6M-3.0 517.7L2263.0 375.7M-3.0 523.9L2263.0 376.8M-3.0 530.5L2263.0 378.0M-3.0 537.7L2263.0 379.3M-3.0 553.7L2263.0 382.2M-3.0 562.8L2263.0 383.8M-3.0 572.7L2263.0 385.6M-3.0 583.6L2263.0 387.6M-3.0 595.5L2263.0 389.7M-3.0 608.7L2263.0 392.1M-3.0 623.3L2263.0 394.8M-3.0 639.7L2263.0 397.7M-3.0 658.0L2263.0 401.1M-3.0 702.7L2263.0 409.1M-3.0 730.1L2263.0 414.1M-3.0 762.1L2263.0 419.9M-3.0 799.9L2263.0 426.7M-3.0 845.2L2263.0 434.9M-3.0 900.5L2263.0 444.9M-3.0 969.5L2263.0 457.4M-3.0 1058.0L2263.0 473.4M-3.0 1175.8L2263.0 494.7M38.3 1567.0L2263.0 568.8M709.7 1567.0L2263.0 642.2M1381.0 1567.0L2263.0 786.9M2052.4 1567.0L2263.0 1204.8M-3.0 879.1L644.1 1567.0M-3.0 681.9L1316.0 1567.0M-3.0 590.9L1987.9 1567.0M-3.0 538.6L2263.0 1413.8M-3.0 480.7L2263.0 1095.1M-3.0 463.0L2263.0 997.7M-3.0 449.4L2263.0 922.7M-3.0 438.6L2263.0 863.2M-3.0 429.8L2263.0 814.7M-3.0 422.5L2263.0 774.6M-3.0 416.3L2263.0 740.7M-3.0 411.1L2263.0 711.8M-3.0 406.5L2263.0 686.8M-3.0 399.1L2263.0 645.8M-3.0 396.0L2263.0 628.8M-3.0 393.2L2263.0 613.6M-3.0 390.8L2263.0 599.9M-3.0 388.5L2263.0 587.6M-3.0 386.5L2263.0 576.4M-3.0 384.6L2263.0 566.2M-3.0 382.9L2263.0 556.8M-3.0 381.4L2263.0 548.2M-3.0 378.6L2263.0 533.0M-3.0 377.3L2263.0 526.1M-3.0 376.2L2263.0 519.8M-3.0 375.1L2263.0 513.9M-3.0 374.1L2263.0 508.4M-3.0 373.2L2263.0 503.2M-3.0 372.3L2263.0 498.4M-3.0 371.5L2263.0 493.8M-3.0 370.7L2263.0 489.5M-3.0 369.2L2263.0 481.6M-3.0 368.6L2263.0 477.9M-3.0 368.0L2263.0 474.5M-3.0 367.4L2263.0 471.2M-3.0 366.8L2263.0 468.1M-3.0 366.3L2263.0 465.1M-3.0 365.7L2263.0 462.3M-3.0 365.3L2263.0 459.6M-3.0 364.8L2263.0 457.0M-3.0 363.9L2263.0 452.2M-3.0 363.5L2263.0 449.9M-3.0 363.1L2263.0 447.8M-3.0 362.7L2263.0 445.7M-3.0 362.4L2263.0 443.7M-3.0 362.0L2263.0 441.8M-3.0 361.7L2263.0 439.9M-3.0 361.4L2263.0 438.1M-3.0 361.0L2263.0 436.4M-3.0 360.5L2263.0 433.2M-3.0 360.2L2263.0 431.6M-3.0 359.9L2263.0 430.1M-3.0 359.6L2263.0 428.7M-3.0 359.4L2263.0 427.3M-3.0 359.1L2263.0 426.0M-3.0 358.9L2263.0 424.7M-3.0 358.7L2263.0 423.4M-3.0 358.5L2263.0 422.2M-3.0 358.0L2263.0 419.8M3.2 358.0L2263.0 418.7M10.8 358.0L2263.0 417.6M18.3 358.0L2263.0 416.6M25.8 358.0L2263.0 415.6M33.3 358.0L2263.0 414.6M40.9 358.0L2263.0 413.6M48.4 358.0L2263.0 412.7M55.9 358.0L2263.0 411.8M70.9 358.0L2263.0 410.0M78.5 358.0L2263.0 409.2M86.0 358.0L2263.0 408.3M93.5 358.0L2263.0 407.5M101.0 358.0L2263.0 406.7M108.5 358.0L2263.0 406.0M116.1 358.0L2263.0 405.2M123.6 358.0L2263.0 404.5M131.1 358.0L2263.0 403.8M146.1 358.0L2263.0 402.4M153.7 358.0L2263.0 401.8M161.2 358.0L2263.0 401.1M168.7 358.0L2263.0 400.5M176.2 358.0L2263.0 399.9M183.7 358.0L2263.0 399.3M191.3 358.0L2263.0 398.7M198.8 358.0L2263.0 398.1M206.3 358.0L2263.0 397.5M221.4 358.0L2263.0 396.4M228.9 358.0L2263.0 395.9M236.4 358.0L2263.0 395.4M243.9 358.0L2263.0 394.8M251.4 358.0L2263.0 394.3M259.0 358.0L2263.0 393.9M266.5 358.0L2263.0 393.4M274.0 358.0L2263.0 392.9M281.5 358.0L2263.0 392.4M296.6 358.0L2263.0 391.5M304.1 358.0L2263.0 391.1M311.6 358.0L2263.0 390.7M319.1 358.0L2263.0 390.2M326.6 358.0L2263.0 389.8M334.2 358.0L2263.0 389.4M341.7 358.0L2263.0 389.0M349.2 358.0L2263.0 388.6M356.7 358.0L2263.0 388.2M371.8 358.0L2263.0 387.5M379.3 358.0L2263.0 387.1M386.8 358.0L2263.0 386.8M394.3 358.0L2263.0 386.4M401.9 358.0L2263.0 386.1M409.4 358.0L2263.0 385.7M416.9 358.0L2263.0 385.4M424.4 358.0L2263.0 385.0M431.9 358.0L2263.0 384.7M447.0 358.0L2263.0 384.1M454.5 358.0L2263.0 383.8M462.0 358.0L2263.0 383.5M469.5 358.0L2263.0 383.2M477.1 358.0L2263.0 382.9M484.6 358.0L2263.0 382.6M492.1 358.0L2263.0 382.3M499.6 358.0L2263.0 382.0M507.2 358.0L2263.0 381.7M522.2 358.0L2263.0 381.2M529.7 358.0L2263.0 380.9M537.2 358.0L2263.0 380.6M544.8 358.0L2263.0 380.4M552.3 358.0L2263.0 380.1M559.8 358.0L2263.0 379.9M567.3 358.0L2263.0 379.6M574.8 358.0L2263.0 379.4M582.4 358.0L2263.0 379.1M597.4 358.0L2263.0 378.7M604.9 358.0L2263.0 378.4M612.4 358.0L2263.0 378.2M620.0 358.0L2263.0 378.0M627.5 358.0L2263.0 377.7M635.0 358.0L2263.0 377.5M642.5 358.0L2263.0 377.3M650.1 358.0L2263.0 377.1M657.6 358.0L2263.0 376.9M672.6 358.0L2263.0 376.5M680.1 358.0L2263.0 376.3M687.7 358.0L2263.0 376.1M695.2 358.0L2263.0 375.9M702.7 358.0L2263.0 375.7M710.2 358.0L2263.0 375.5M717.7 358.0L2263.0 375.3M725.3 358.0L2263.0 375.1M732.8 358.0L2263.0 374.9M747.8 358.0L2263.0 374.5M755.3 358.0L2263.0 374.4M762.9 358.0L2263.0 374.2M770.4 358.0L2263.0 374.0M777.9 358.0L2263.0 373.8M785.4 358.0L2263.0 373.7M792.9 358.0L2263.0 373.5M800.5 358.0L2263.0 373.3M808.0 358.0L2263.0 373.2M823.0 358.0L2263.0 372.8M830.6 358.0L2263.0 372.7M838.1 358.0L2263.0 372.5M845.6 358.0L2263.0 372.4M853.1 358.0L2263.0 372.2M860.6 358.0L2263.0 372.0M868.2 358.0L2263.0 371.9M875.7 358.0L2263.0 371.7M883.2 358.0L2263.0 371.6M898.2 358.0L2263.0 371.3M905.8 358.0L2263.0 371.2M913.3 358.0L2263.0 371.0M920.8 358.0L2263.0 370.9M928.3 358.0L2263.0 370.7M935.8 358.0L2263.0 370.6M943.4 358.0L2263.0 370.5M950.9 358.0L2263.0 370.3M958.4 358.0L2263.0 370.2M973.5 358.0L2263.0 369.9M981.0 358.0L2263.0 369.8M988.5 358.0L2263.0 369.7M996.0 358.0L2263.0 369.5M1003.5 358.0L2263.0 369.4M1011.1 358.0L2263.0 369.3M1018.6 358.0L2263.0 369.2M1026.1 358.0L2263.0 369.0M1033.6 358.0L2263.0 368.9M1048.7 358.0L2263.0 368.7M1056.2 358.0L2263.0 368.6M1063.7 358.0L2263.0 368.5M1071.2 358.0L2263.0 368.3M1078.7 358.0L2263.0 368.2M1086.3 358.0L2263.0 368.1M1093.8 358.0L2263.0 368.0M1101.3 358.0L2263.0 367.9M1108.8 358.0L2263.0 367.8M1123.9 358.0L2263.0 367.6M1131.4 358.0L2263.0 367.5M1138.9 358.0L2263.0 367.4M1146.4 358.0L2263.0 367.2M1154.0 358.0L2263.0 367.1M1161.5 358.0L2263.0 367.0M1169.0 358.0L2263.0 366.9M1176.5 358.0L2263.0 366.8M1184.0 358.0L2263.0 366.7M1199.1 358.0L2263.0 366.5M1206.6 358.0L2263.0 366.4M1214.1 358.0L2263.0 366.3M1221.6 358.0L2263.0 366.2M1229.2 358.0L2263.0 366.2M1236.7 358.0L2263.0 366.1M1244.2 358.0L2263.0 366.0M1251.7 358.0L2263.0 365.9M1259.2 358.0L2263.0 365.8M1274.3 358.0L2263.0 365.6M1281.8 358.0L2263.0 365.5M1289.3 358.0L2263.0 365.4M1296.9 358.0L2263.0 365.3M1304.4 358.0L2263.0 365.2M1311.9 358.0L2263.0 365.2M1319.4 358.0L2263.0 365.1M1326.9 358.0L2263.0 365.0M1334.5 358.0L2263.0 364.9M1349.5 358.0L2263.0 364.7M1357.0 358.0L2263.0 364.7M1364.5 358.0L2263.0 364.6M1372.1 358.0L2263.0 364.5M1379.6 358.0L2263.0 364.4M1387.1 358.0L2263.0 364.3M1394.6 358.0L2263.0 364.3M1402.1 358.0L2263.0 364.2M1409.7 358.0L2263.0 364.1M1424.7 358.0L2263.0 363.9M1432.2 358.0L2263.0 363.9M1439.8 358.0L2263.0 363.8M1447.3 358.0L2263.0 363.7M1454.8 358.0L2263.0 363.6M1462.3 358.0L2263.0 363.6M1469.8 358.0L2263.0 363.5M1477.4 358.0L2263.0 363.4M1484.9 358.0L2263.0 363.3M1499.9 358.0L2263.0 363.2M1507.4 358.0L2263.0 363.1M1515.0 358.0L2263.0 363.1M1522.5 358.0L2263.0 363.0M1530.0 358.0L2263.0 362.9M1537.5 358.0L2263.0 362.9M1545.0 358.0L2263.0 362.8M1552.6 358.0L2263.0 362.7M1560.1 358.0L2263.0 362.7M1575.1 358.0L2263.0 362.5M1582.7 358.0L2263.0 362.5M1590.2 358.0L2263.0 362.4M1597.7 358.0L2263.0 362.3M1605.2 358.0L2263.0 362.3M1612.7 358.0L2263.0 362.2M1620.3 358.0L2263.0 362.1M1627.8 358.0L2263.0 362.1M1635.3 358.0L2263.0 362.0M1650.3 358.0L2263.0 361.9M1657.9 358.0L2263.0 361.8M1665.4 358.0L2263.0 361.8M1672.9 358.0L2263.0 361.7M1680.4 358.0L2263.0 361.6M1687.9 358.0L2263.0 361.6M1695.5 358.0L2263.0 361.5M1703.0 358.0L2263.0 361.5M1710.5 358.0L2263.0 361.4M1725.6 358.0L2263.0 361.3M1733.1 358.0L2263.0 361.2M1740.6 358.0L2263.0 361.2M1748.1 358.0L2263.0 361.1M1755.6 358.0L2263.0 361.1M1763.2 358.0L2263.0 361.0M1770.7 358.0L2263.0 361.0M1778.2 358.0L2263.0 360.9M1785.7 358.0L2263.0 360.9M1800.8 358.0L2263.0 360.7M1808.3 358.0L2263.0 360.7M1815.8 358.0L2263.0 360.6M1823.3 358.0L2263.0 360.6M1830.8 358.0L2263.0 360.5M1838.4 358.0L2263.0 360.5M1845.9 358.0L2263.0 360.4M1853.4 358.0L2263.0 360.4M1860.9 358.0L2263.0 360.3M1876.0 358.0L2263.0 360.2M1883.5 358.0L2263.0 360.2M1891.0 358.0L2263.0 360.1M1898.5 358.0L2263.0 360.1M1906.1 358.0L2263.0 360.0M1913.6 358.0L2263.0 360.0M1921.1 358.0L2263.0 359.9M1928.6 358.0L2263.0 359.9M1936.1 358.0L2263.0 359.8M1951.2 358.0L2263.0 359.7M1958.7 358.0L2263.0 359.7M1966.2 358.0L2263.0 359.6M1973.7 358.0L2263.0 359.6M1981.3 358.0L2263.0 359.6M1988.8 358.0L2263.0 359.5M1996.3 358.0L2263.0 359.5M2003.8 358.0L2263.0 359.4M2011.3 358.0L2263.0 359.4M2026.4 358.0L2263.0 359.3M2033.9 358.0L2263.0 359.2M2041.4 358.0L2263.0 359.2M2049.0 358.0L2263.0 359.1M2056.5 358.0L2263.0 359.1M2064.0 358.0L2263.0 359.1M2071.5 358.0L2263.0 359.0M2079.0 358.0L2263.0 359.0M2086.6 358.0L2263.0 358.9M2101.6 358.0L2263.0 358.8M2109.1 358.0L2263.0 358.8M2116.6 358.0L2263.0 358.8M2124.2 358.0L2263.0 358.7M2131.7 358.0L2263.0 358.7M2139.2 358.0L2263.0 358.6M2146.7 358.0L2263.0 358.6M2154.2 358.0L2263.0 358.6M2161.8 358.0L2263.0 358.5M2176.8 358.0L2263.0 358.4M2184.3 358.0L2263.0 358.4M2191.9 358.0L2263.0 358.4M2199.4 358.0L2263.0 358.3M2206.9 358.0L2263.0 358.3M2214.4 358.0L2263.0 358.2M2221.9 358.0L2263.0 358.2M2229.5 358.0L2263.0 358.2M2237.0 358.0L2263.0 358.1M2252.0 358.0L2263.0 358.1M2259.5 358.0L2263.0 358.0" stroke="#656565" stroke-opacity=".58" stroke-width="2.3" fill="none"/><path d="M-3.0 352.0L-1.3 352.0M-3.0 352.1L41.0 352.0M-3.0 352.2L83.2 352.0M-3.0 352.4L125.4 352.0M-3.0 352.5L167.6 352.0M-3.0 352.6L209.8 352.0M-3.0 352.8L252.0 352.0M-3.0 352.9L294.2 352.0M-3.0 353.1L336.4 352.0M-3.0 353.2L378.6 352.0M-3.0 353.4L420.8 352.0M-3.0 353.6L463.0 352.0M-3.0 353.7L505.2 352.0M-3.0 353.9L547.4 352.0M-3.0 354.1L589.6 352.0M-3.0 354.3L631.8 352.0M-3.0 354.5L674.0 352.0M-3.0 354.7L716.2 352.0M-3.0 354.9L758.4 352.0M-3.0 355.1L800.6 352.0M-3.0 355.4L842.8 352.0M-3.0 355.6L885.0 352.0M-3.0 355.9L927.2 352.0M-3.0 356.2L969.4 352.0M-3.0 356.5L1011.7 352.0M-3.0 356.8L1053.9 352.0M-3.0 357.1L1096.1 352.0M-3.0 357.4L1138.3 352.0M-3.0 357.7L1180.5 352.0M-3.0 358.1L1222.7 352.0M-3.0 358.5L1264.9 352.0M-3.0 358.9L1307.1 352.0M-3.0 359.4L1349.3 352.0M-3.0 359.8L1391.5 352.0M-3.0 360.3L1433.7 352.0M-3.0 360.8L1475.9 352.0M-3.0 361.4L1518.1 352.0M-3.0 362.0L1560.3 352.0M-3.0 362.6L1602.5 352.0M-3.0 363.3L1644.7 352.0M-3.0 364.1L1686.9 352.0M-3.0 364.9L1729.1 352.0M-3.0 365.7L1771.3 352.0M-3.0 366.7L1813.5 352.0M-3.0 367.7L1855.7 352.0M-3.0 368.9L1897.9 352.0M-3.0 370.1L1940.2 352.0M-3.0 371.5L1982.4 352.0M-3.0 373.1L2024.6 352.0M-3.0 374.8L2066.8 352.0M-3.0 376.8L2109.0 352.0M-3.0 379.0L2151.2 352.0M-3.0 381.6L2193.4 352.0M-3.0 384.6L2235.6 352.0M-3.0 388.1L2263.0 352.2M-3.0 392.3L2263.0 353.0M-3.0 397.3L2263.0 353.9M-3.0 403.5L2263.0 355.0M-3.0 411.4L2263.0 356.5M-3.0 421.8L2263.0 358.3M-3.0 435.8L2263.0 360.9M-3.0 456.1L2263.0 364.5M-3.0 488.0L2263.0 370.3M-3.0 545.4L2263.0 380.7M-3.0 678.9L2263.0 404.8M-3.0 402.6L2263.0 665.0M-3.0 379.9L2263.0 540.3M-3.0 369.9L2263.0 485.4M-3.0 364.3L2263.0 454.5M-3.0 360.7L2263.0 434.8M-3.0 358.2L2263.0 421.0M-3.0 356.4L2263.0 410.9M-3.0 355.0L2263.0 403.1M-3.0 353.9L2263.0 397.0M-3.0 353.0L2263.0 392.0M-3.0 352.2L2263.0 387.9M25.0 352.0L2263.0 384.4M67.2 352.0L2263.0 381.4M109.5 352.0L2263.0 378.9M151.7 352.0L2263.0 376.7M193.9 352.0L2263.0 374.7M236.2 352.0L2263.0 373.0M278.4 352.0L2263.0 371.4M320.6 352.0L2263.0 370.1M362.9 352.0L2263.0 368.8M405.1 352.0L2263.0 367.7M447.4 352.0L2263.0 366.6M489.6 352.0L2263.0 365.7M531.8 352.0L2263.0 364.8M574.1 352.0L2263.0 364.0M616.3 352.0L2263.0 363.3M658.5 352.0L2263.0 362.6M700.8 352.0L2263.0 362.0M743.0 352.0L2263.0 361.4M785.3 352.0L2263.0 360.8M827.5 352.0L2263.0 360.3M869.7 352.0L2263.0 359.8M912.0 352.0L2263.0 359.3M954.2 352.0L2263.0 358.9M996.5 352.0L2263.0 358.5M1038.7 352.0L2263.0 358.1M1080.9 352.0L2263.0 357.7M1123.2 352.0L2263.0 357.4M1165.4 352.0L2263.0 357.0M1207.6 352.0L2263.0 356.7M1249.9 352.0L2263.0 356.4M1292.1 352.0L2263.0 356.2M1334.4 352.0L2263.0 355.9M1376.6 352.0L2263.0 355.6M1418.8 352.0L2263.0 355.4M1461.1 352.0L2263.0 355.1M1503.3 352.0L2263.0 354.9M1545.6 352.0L2263.0 354.7M1587.8 352.0L2263.0 354.5M1630.0 352.0L2263.0 354.3M1672.3 352.0L2263.0 354.1M1714.5 352.0L2263.0 353.9M1756.7 352.0L2263.0 353.7M1799.0 352.0L2263.0 353.5M1841.2 352.0L2263.0 353.4M1883.5 352.0L2263.0 353.2M1925.7 352.0L2263.0 353.1M1967.9 352.0L2263.0 352.9M2010.2 352.0L2263.0 352.8M2052.4 352.0L2263.0 352.6M2094.7 352.0L2263.0 352.5M2136.9 352.0L2263.0 352.4M2179.1 352.0L2263.0 352.2M2221.4 352.0L2263.0 352.1" stroke="#6a6a6a" stroke-opacity=".62" stroke-width="2.3" fill="none"/><path d="M-3.0 504.6L2263.0 1226.5" stroke="#b83d50" stroke-width="2.8" fill="none"/><path d="M-3.0 1340.2L2263.0 524.5" stroke="#70a327" stroke-width="2.8" fill="none"/></g><path d="M621.9 863.7L1471.7 1255.0L1916.4 941.4L1115.4 743.9Z" fill="#868889"/><path d="M1112.0 744.8L1913.8 943.3L1919.1 939.2L1118.7 742.8Z" fill="#878889"/><path d="M1115.4 743.9L1916.4 941.4L1921.7 936.7L1122.0 741.6Z" fill="#87888a"/><path d="M1118.7 742.8L1919.1 939.2L1924.3 934.1L1125.3 740.2Z" fill="#88898b"/><path d="M1122.0 741.6L1921.7 936.7L1927.0 931.2L1128.6 738.6Z" fill="#8a8b8c"/><path d="M1125.3 740.2L1924.3 934.1L1929.7 928.1L1131.8 736.9Z" fill="#8c8d8f"/><path d="M1128.6 738.6L1927.0 931.2L1932.3 924.8L1135.0 735.0Z" fill="#8f9091"/><path d="M1131.8 736.9L1929.7 928.1L1935.0 921.3L1138.1 732.9Z" fill="#939495"/><path d="M1135.0 735.0L1932.3 924.8L1937.6 917.5L1141.2 730.7Z" fill="#97989a"/><path d="M1138.1 732.9L1935.0 921.3L1940.3 913.6L1144.2 728.3Z" fill="#9b9c9d"/><path d="M1141.2 730.7L1937.6 917.5L1942.9 909.5L1147.1 725.8Z" fill="#9fa0a1"/><path d="M1144.2 728.3L1940.3 913.6L1945.5 905.2L1150.1 723.2Z" fill="#a2a3a5"/><path d="M1147.1 725.8L1942.9 909.5L1948.1 900.7L1152.9 720.4Z" fill="#a5a6a7"/><path d="M1150.1 723.2L1945.5 905.2L1950.7 896.1L1155.7 717.5Z" fill="#a6a7a9"/><path d="M1152.9 720.4L1948.1 900.7L1953.3 891.2L1158.4 714.5Z" fill="#a8a9ab"/><path d="M1155.7 717.5L1950.7 896.1L1955.8 886.3L1161.0 711.3Z" fill="#a8a9ab"/><path d="M1158.4 714.5L1953.3 891.2L1958.3 881.2L1163.5 708.0Z" fill="#a9aaac"/><path d="M1161.0 711.3L1955.8 886.3L1960.8 875.9L1166.0 704.6Z" fill="#a9aaac"/><path d="M1163.5 708.0L1958.3 881.2L1963.2 870.5L1168.4 701.1Z" fill="#a9aaac"/><path d="M1166.0 704.6L1960.8 875.9L1965.6 865.0L1170.7 697.5Z" fill="#a9aaab"/><path d="M1168.4 701.1L1963.2 870.5L1967.9 859.3L1172.9 693.8Z" fill="#a8a9ab"/><path d="M1170.7 697.5L1965.6 865.0L1970.2 853.6L1175.0 690.0Z" fill="#a7a8aa"/><path d="M1172.9 693.8L1967.9 859.3L1972.5 847.7L1177.0 686.1Z" fill="#a7a8a9"/><path d="M1175.0 690.0L1970.2 853.6L1974.7 841.7L1178.9 682.2Z" fill="#a6a7a9"/><path d="M1177.0 686.1L1972.5 847.7L1976.8 835.7L1180.7 678.1Z" fill="#a5a6a8"/><path d="M1178.9 682.2L1974.7 841.7L1978.9 829.5L1182.5 674.0Z" fill="#a4a5a7"/><path d="M1180.7 678.1L1976.8 835.7L1981.0 823.3L1184.1 669.8Z" fill="#a3a4a6"/><path d="M1182.5 674.0L1978.9 829.5L1983.0 817.0L1185.6 665.6Z" fill="#a3a4a5"/><path d="M1184.1 669.8L1981.0 823.3L1984.9 810.7L1187.0 661.3Z" fill="#a2a3a4"/><path d="M1185.6 665.6L1983.0 817.0L1986.7 804.2L1188.3 656.9Z" fill="#a1a2a4"/><path d="M1187.0 661.3L1984.9 810.7L1988.5 797.8L1189.4 652.5Z" fill="#a0a1a3"/><path d="M1188.3 656.9L1986.7 804.2L1990.3 791.3L1190.5 648.1Z" fill="#a0a1a3"/><path d="M1189.4 652.5L1988.5 797.8L1991.9 784.7L1191.4 643.6Z" fill="#a0a1a2"/><path d="M1190.5 648.1L1990.3 791.3L1993.5 778.2L1192.3 639.1Z" fill="#9fa0a2"/><path d="M1191.4 643.6L1991.9 784.7L1995.0 771.6L1193.0 634.6Z" fill="#9fa0a2"/><path d="M1192.3 639.1L1993.5 778.2L1996.4 765.0L1193.6 630.0Z" fill="#9fa0a1"/><path d="M1193.0 634.6L1995.0 771.6L1997.8 758.4L1194.1 625.5Z" fill="#9fa0a1"/><path d="M1193.6 630.0L1996.4 765.0L1999.1 751.8L1194.4 620.9Z" fill="#9e9fa1"/><path d="M1194.1 625.5L1997.8 758.4L2000.3 745.2L1194.6 616.4Z" fill="#9e9fa1"/><path d="M1194.4 620.9L1999.1 751.8L2001.4 738.7L1194.8 611.8Z" fill="#9e9fa1"/><path d="M1194.6 616.4L2000.3 745.2L2054.8 477.3L1213.1 433.6Z" fill="#9e9fa1"/><path d="M1194.8 611.8L2001.4 738.7L2054.8 477.3L1213.1 433.6Z" fill="#9e9fa1"/><path d="M1263.5 455 L1257 778" stroke="#000" stroke-opacity=".17" stroke-width="1.3"/><path d="M1176 778 H1282 L1293.5 809.5 H1177.5Z" fill="#838485"/><path d="M1177.5 809.5 H1293.5 L1290.5 914.5 H1178.5Z" fill="#8c8d8d"/><path d="M1176 778 L1177.5 809.5 L1178.5 914.5 L1175.5 900Z" fill="#7c7d7e"/><path d="M1176 778 H1282 L1293.5 809.5 L1290.5 914.5 H1178.5 L1175.5 900Z" fill="none" stroke="#7a7b7c" stroke-opacity=".75" stroke-width="2.6" stroke-linejoin="round"/><path d="M1177.5 809.5 H1293.5" stroke="#7d7e7e" stroke-width="1"/><circle cx="1263.5" cy="455" r="60.7" fill="none" stroke="#000" stroke-width="1.7"/><circle cx="1263.5" cy="455" r="23.5" fill="none" stroke="#000" stroke-width="1.8" stroke-dasharray="7.4 7.4" transform="rotate(-12 1263.5 455)"/><circle cx="1263.5" cy="455" r="17" fill="none" stroke="#000" stroke-width="1.8" stroke-dasharray="6.7 6.7" transform="rotate(20 1263.5 455)"/><path d="M1263.5 449L1268.5 455L1263.5 461L1258.5 455Z" fill="none" stroke="#000" stroke-width="1.6"/><path d="M963.8 617.8L970.0 816.0" stroke="#000" stroke-opacity=".28" stroke-width="1.4"/><circle cx="963.8" cy="617.8" r="31.7" fill="none" stroke="#000" stroke-width="1.7"/><circle cx="963.8" cy="617.8" r="23.5" fill="none" stroke="#000" stroke-width="1.8" stroke-dasharray="7.4 7.4" transform="rotate(-12 963.8 617.8)"/><circle cx="963.8" cy="617.8" r="17" fill="none" stroke="#000" stroke-width="1.8" stroke-dasharray="6.7 6.7" transform="rotate(20 963.8 617.8)"/><path d="M963.8 611.8L968.8 617.8L963.8 623.8L958.8 617.8Z" fill="none" stroke="#000" stroke-width="1.6"/><path d="M970 812 l3 4 l-3 4 l-3 -4z" fill="none" stroke="#000" stroke-opacity=".3" stroke-width="1"/><path d="M1104.5 1079.4L1107.5 1410.0" stroke="#000" stroke-opacity=".28" stroke-width="1.4"/><circle cx="1104.5" cy="1079.4" r="73.1" fill="none" stroke="#000" stroke-width="1.7"/><circle cx="1104.5" cy="1079.4" r="23.5" fill="none" stroke="#000" stroke-width="1.8" stroke-dasharray="7.4 7.4" transform="rotate(-12 1104.5 1079.4)"/><circle cx="1104.5" cy="1079.4" r="17" fill="none" stroke="#000" stroke-width="1.8" stroke-dasharray="6.7 6.7" transform="rotate(20 1104.5 1079.4)"/><path d="M1104.5 1073.4L1109.5 1079.4L1104.5 1085.4L1099.5 1079.4Z" fill="none" stroke="#000" stroke-width="1.6"/><path d="M480 553.4 L559 570 M480 553.4 L591 576 M480 553.4 L563 606 M480 553.4 L595 614.5" stroke="#000" stroke-width="1.5" fill="none"/><path d="M572.4 546 L563.5 567.5 L585.5 571Z" fill="#000"/><path d="M559 570 L591 576.2 L595.2 614.5 L563 606Z" fill="none" stroke="#f3e33a" stroke-width="2.2" stroke-linejoin="round"/><circle cx="480" cy="553.4" r="5" fill="#ff9d1e" stroke="#1a1a1a" stroke-width="1"/><circle cx="1230" cy="897.4" r="20" fill="none" stroke="#fff" stroke-width="2"/><circle cx="1230" cy="897.4" r="20" fill="none" stroke="#f01010" stroke-width="2" stroke-dasharray="7.85 7.85" stroke-dashoffset="3.9"/><path d="M1230.5 859 V887.5 M1230 907.4 V934.5 M1201 887.5 L1222.5 894.6 M1203 906.8 L1223 899.7 M1237.2 894.6 L1256.5 887.5 M1238 899.7 L1260.5 907.4" stroke="#000" stroke-width="2" fill="none"/></svg>
</div>
<div class="a" style="left:18.6px;top:66.0px;width:60.6px;height:36.2px;background:#2e2e2e;border-radius:6px;box-shadow:0 0 0 1px #414141;"></div>
<svg style="left:27.0px;top:69.0px;" width="32" height="30"><g stroke="#d0d0d0" stroke-width="2.2" fill="none" stroke-linecap="round"><path d="M3 14 H14 M1 22 H27 M9 9 L5 28 M21 18 L24 28"/></g><circle cx="21" cy="9" r="7.6" fill="#dedede"/><path d="M16.5 8 A5 5 0 0 1 20 4.5" stroke="#2e2e2e" stroke-width="1.6" fill="none" stroke-linecap="round"/></svg>
<svg style="left:58.5px;top:79.8px;" width="16" height="10"><path d="M2 2 L8.0 8 L14 2" fill="none" stroke="#b0b0b0" stroke-width="2.6" stroke-linecap="round" stroke-linejoin="round"/></svg>
<div class="a" style="left:93.0px;top:66.0px;width:216.5px;height:36.2px;background:#2e2e2e;border-radius:6px;box-shadow:0 0 0 1px #414141;"></div>
<svg style="left:101.0px;top:70.2px;" width="28" height="28"><g transform="scale(1.0)"><rect x="6.5" y="6.5" width="15" height="15" fill="#dcdcdc"/><path d="M1 8 V1 H8 M20 1 H27 V8 M27 20 V27 H20 M8 27 H1 V20" fill="none" stroke="#9a9a9a" stroke-width="2"/></g></svg>
<div class="t" style="left:143.0px;top:70.9px;color:#d6d6d6;">Object Mode</div>
<svg style="left:289.4px;top:79.8px;" width="16" height="10"><path d="M2 2 L8.0 8 L14 2" fill="none" stroke="#b0b0b0" stroke-width="2.6" stroke-linecap="round" stroke-linejoin="round"/></svg>
<div class="a" style="left:322.4px;top:66.0px;width:78.6px;height:36.2px;background:#2e2e2e;border-radius:6px;box-shadow:0 0 0 1px #414141;"></div>
<div class="t" style="left:335.5px;top:70.9px;color:#d6d6d6;">View</div>
<div class="a" style="left:404.8px;top:66.0px;width:91.5px;height:36.2px;background:#2e2e2e;border-radius:6px;box-shadow:0 0 0 1px #414141;"></div>
<div class="t" style="left:417.0px;top:70.9px;color:#d6d6d6;">Select</div>
<div class="a" style="left:500.0px;top:66.0px;width:66.8px;height:36.2px;background:#2e2e2e;border-radius:6px;box-shadow:0 0 0 1px #414141;"></div>
<div class="t" style="left:511.5px;top:70.9px;color:#d6d6d6;">Add</div>
<div class="a" style="left:571.0px;top:66.0px;width:95.2px;height:36.2px;background:#2e2e2e;border-radius:6px;box-shadow:0 0 0 1px #414141;"></div>
<div class="t" style="left:582.5px;top:70.9px;color:#d6d6d6;">Object</div>
<div class="a" style="left:879.0px;top:66.0px;width:156.2px;height:36.2px;background:#2e2e2e;border-radius:6px;box-shadow:0 0 0 1px #414141;"></div>
<div class="t" style="left:929.0px;top:70.9px;color:#d6d6d6;">Global</div>
<svg style="left:1015.0px;top:79.8px;" width="16" height="10"><path d="M2 2 L8.0 8 L14 2" fill="none" stroke="#b0b0b0" stroke-width="2.6" stroke-linecap="round" stroke-linejoin="round"/></svg>
<svg style="left:886.0px;top:68.0px;" width="32" height="32"><g fill="none" stroke="#dcdcdc" stroke-width="2.2" stroke-linecap="round" stroke-linejoin="round"><path d="M6 21.5 V4 M2 8 L6 3.5 L10 8 M9 24.5 H28 M24 20.5 L28.5 24.5 L24 28.5"/><circle cx="6" cy="24.5" r="2.8"/></g><path d="M8.5 22 L21 9.5 M15 9 H21.5 V15.5" fill="none" stroke="#999" stroke-width="2.2" stroke-linecap="round"/></svg>
<div class="a" style="left:1049.4px;top:66.0px;width:59.6px;height:36.2px;background:#2e2e2e;border-radius:6px;box-shadow:0 0 0 1px #414141;"></div>
<svg style="left:1089.6px;top:79.8px;" width="16" height="10"><path d="M2 2 L8.0 8 L14 2" fill="none" stroke="#b0b0b0" stroke-width="2.6" stroke-linecap="round" stroke-linejoin="round"/></svg>
<svg style="left:1057.0px;top:70.0px;" width="28" height="28"><path d="M1 8 V1 H8 M20 1 H27 V8 M27 20 V27 H20 M8 27 H1 V20" fill="none" stroke="#9a9a9a" stroke-width="2"/><circle cx="14" cy="14" r="4" fill="#e0e0e0"/></svg>
<div class="a" style="left:1123.0px;top:66.0px;width:100.0px;height:36.2px;background:#2e2e2e;border-radius:6px;box-shadow:0 0 0 1px #414141;"></div>
<div class="a" style="left:1123.0px;top:66.0px;width:36.0px;height:36.2px;background:#555;border-radius:6px 0 0 6px;"></div>
<svg style="left:1126.0px;top:69.0px;" width="30" height="30"><path d="M6 12 L15 6 A9.5 9.5 0 0 1 22 23 L17.5 27.5 L13.5 23.5 L18 19 A4 4 0 0 0 15 12.5 L9.5 16.5 Z" fill="none" stroke="#9c9c9c" stroke-width="2.2" stroke-linejoin="round"/></svg>
<svg style="left:1165.0px;top:66.0px;" width="30" height="32"><path d="M2 17 V29 M14.5 17 V29 M27 17 V29 M2 23 H27 M8.2 20 V26 M20.8 20 V26" stroke="#dcdcdc" stroke-width="2.2" fill="none"/><rect x="21.5" y="2" width="7.5" height="7.5" fill="#dcdcdc"/></svg>
<svg style="left:1203.3px;top:79.8px;" width="16" height="10"><path d="M2 2 L8.0 8 L14 2" fill="none" stroke="#b0b0b0" stroke-width="2.6" stroke-linecap="round" stroke-linejoin="round"/></svg>
<div class="a" style="left:1237.2px;top:66.0px;width:99.4px;height:36.2px;background:#2e2e2e;border-radius:6px;box-shadow:0 0 0 1px #414141;"></div>
<div class="a" style="left:1237.2px;top:66.0px;width:35.6px;height:36.2px;background:#555;border-radius:6px 0 0 6px;"></div>
<svg style="left:1241.0px;top:70.0px;" width="28" height="28"><circle cx="14" cy="14" r="12" fill="none" stroke="#8a8a8a" stroke-width="2"/><circle cx="14" cy="14" r="4" fill="#a8a8a8"/></svg>
<svg style="left:1282.0px;top:70.0px;" width="30" height="28"><path d="M1 26 C9 26 9 2 15 2 C21 2 21 26 29 26" fill="none" stroke="#999" stroke-width="2.2" stroke-linecap="round"/></svg>
<svg style="left:1317.0px;top:79.8px;" width="16" height="10"><path d="M2 2 L8.0 8 L14 2" fill="none" stroke="#8a8a8a" stroke-width="2.6" stroke-linecap="round" stroke-linejoin="round"/></svg>
<div class="a" style="left:1748.2px;top:66.0px;width:60.0px;height:36.2px;background:#2e2e2e;border-radius:6px;box-shadow:0 0 0 1px #414141;"></div>
<svg style="left:1788.0px;top:79.8px;" width="16" height="10"><path d="M2 2 L8.0 8 L14 2" fill="none" stroke="#b0b0b0" stroke-width="2.6" stroke-linecap="round" stroke-linejoin="round"/></svg>
<svg style="left:1751.0px;top:68.0px;" width="34" height="34"><path d="M8 11.5 C12 4 24 4 28 11.5 C24 19 12 19 8 11.5Z" fill="#e0e0e0"/><circle cx="18" cy="11.5" r="4.6" fill="#2e2e2e"/><circle cx="18" cy="11.5" r="2.1" fill="#e0e0e0"/><path d="M1 17.5 L16 22.5 L9.5 25 L7 32 Z" fill="#e0e0e0"/></svg>
<div class="a" style="left:1822.5px;top:66.0px;width:75.3px;height:36.2px;background:#2e2e2e;border-radius:6px;box-shadow:0 0 0 1px #414141;"></div>
<div class="a" style="left:1822.5px;top:66.0px;width:35.5px;height:36.2px;background:#5680c2;border-radius:6px 0 0 6px;"></div>
<svg style="left:1870.0px;top:79.8px;" width="16" height="10"><path d="M2 2 L8.0 8 L14 2" fill="none" stroke="#b0b0b0" stroke-width="2.6" stroke-linecap="round" stroke-linejoin="round"/></svg>
<svg style="left:1825.0px;top:68.0px;" width="32" height="32"><g fill="none" stroke="#fff" stroke-width="2.3" stroke-linecap="round"><path d="M3 8 C14 8 23 16 24 29"/><path d="M8.5 25 L27 5 M19 4.5 H27.5 V13"/></g><circle cx="6.5" cy="27" r="3.2" fill="#5680c2" stroke="#fff" stroke-width="2.3"/></svg>
<div class="a" style="left:1912.0px;top:66.0px;width:75.8px;height:36.2px;background:#2e2e2e;border-radius:6px;box-shadow:0 0 0 1px #414141;"></div>
<div class="a" style="left:1912.0px;top:66.0px;width:36.0px;height:36.2px;background:#5680c2;border-radius:6px 0 0 6px;"></div>
<svg style="left:1960.0px;top:79.8px;" width="16" height="10"><path d="M2 2 L8.0 8 L14 2" fill="none" stroke="#b0b0b0" stroke-width="2.6" stroke-linecap="round" stroke-linejoin="round"/></svg>
<svg style="left:1914.0px;top:68.0px;" width="32" height="32"><circle cx="20" cy="12" r="9.5" fill="#fff"/><circle cx="12" cy="20" r="8.2" fill="none" stroke="#fff" stroke-width="2.4"/><path d="M15 9 A8.2 8.2 0 0 1 22 18" fill="none" stroke="#5680c2" stroke-width="2.4" stroke-dasharray="3 2"/></svg>
<div class="a" style="left:2002.4px;top:66.0px;width:35.8px;height:36.2px;background:#555;border-radius:6px;box-shadow:0 0 0 1px #414141;"></div>
<svg style="left:2005.0px;top:69.0px;" width="30" height="30"><path d="M9 7 V3 H27 V21 H23" fill="none" stroke="#bbb" stroke-width="2"/><rect x="3" y="9" width="19" height="19" fill="none" stroke="#e6e6e6" stroke-width="2.4"/><path d="M9 15 V22 H12 M15 22 H17" fill="none" stroke="#e6e6e6" stroke-width="2"/></svg>
<div class="a" style="left:2052.5px;top:66.0px;width:189.7px;height:36.2px;background:#2e2e2e;border-radius:6px;box-shadow:0 0 0 1px #414141;"></div>
<div class="a" style="left:2052.5px;top:66.0px;width:150.0px;height:36.2px;background:#555;border-radius:6px 0 0 6px;"></div>
<div class="a" style="left:2090.0px;top:66.0px;width:36.5px;height:36.2px;background:#5680c2;"></div>
<div class="a" style="left:2126.5px;top:66.0px;width:1.5px;height:36.2px;background:#484848;"></div>
<div class="a" style="left:2164.5px;top:66.0px;width:1.5px;height:36.2px;background:#484848;"></div>
<div class="a" style="left:2088.5px;top:66.0px;width:1.5px;height:36.2px;background:#484848;"></div>
<svg style="left:2056.0px;top:69.0px;" width="30" height="30"><g fill="none" stroke="#aaa" stroke-width="2"><circle cx="15" cy="15" r="13"/><path d="M15 2 V28 M2.5 11 C10 13 20 13 27.5 11 M3 20 C10 18 20 18 27 20"/></g></svg>
<svg style="left:2093.0px;top:69.0px;" width="30" height="30"><circle cx="15" cy="15" r="13.5" fill="#fff"/></svg>
<svg style="left:2131.0px;top:69.0px;" width="30" height="30"><circle cx="15" cy="15" r="13" fill="none" stroke="#aaa" stroke-width="2"/><path d="M15 15 V3.5 A11.5 11.5 0 0 0 3.5 15 A11.5 11.5 0 0 0 8 24 Z" fill="#c8c8c8"/><path d="M15 15 H3.5 A11.5 11.5 0 0 0 7 23.5 Z" fill="#c8c8c8"/><path d="M17 25 L20 28 M20 21 L24.5 25.5 M23 17.5 L27 21.5" stroke="#c8c8c8" stroke-width="2"/></svg>
<svg style="left:2169.0px;top:69.0px;" width="30" height="30"><circle cx="15" cy="15" r="13" fill="none" stroke="#aaa" stroke-width="2"/><path d="M6.5 14 A8.5 8.5 0 0 1 13 6.5" fill="none" stroke="#c8c8c8" stroke-width="2.6" stroke-linecap="round"/><path d="M17 25 L20 28 M20 21 L24.5 25.5 M23 17.5 L27 21.5" stroke="#c8c8c8" stroke-width="2"/></svg>
<svg style="left:2214.0px;top:79.8px;" width="16" height="10"><path d="M2 2 L8.0 8 L14 2" fill="none" stroke="#b0b0b0" stroke-width="2.6" stroke-linecap="round" stroke-linejoin="round"/></svg>
<div class="a" style="left:18.0px;top:128.5px;width:81.0px;height:135.5px;background:#2f2f2f;border-radius:6px;box-shadow:0 1px 3px rgba(0,0,0,.35);"></div>
<div class="a" style="left:18.0px;top:128.5px;width:81.0px;height:66.5px;background:#5680c2;border-radius:6px 6px 0 0;"></div>
<div class="a" style="left:18.0px;top:278.5px;width:81.0px;height:275.0px;background:#2f2f2f;border-radius:6px;box-shadow:0 1px 3px rgba(0,0,0,.35);"></div>
<div class="a" style="left:18.0px;top:568.0px;width:81.0px;height:135.5px;background:#2f2f2f;border-radius:6px;box-shadow:0 1px 3px rgba(0,0,0,.35);"></div>
<div class="a" style="left:18.0px;top:195.0px;width:81.0px;height:1.6px;background:#3a3a3a;"></div>
<div class="a" style="left:18.0px;top:344.2px;width:81.0px;height:1.6px;background:#3a3a3a;"></div>
<div class="a" style="left:18.0px;top:413.8px;width:81.0px;height:1.6px;background:#3a3a3a;"></div>
<div class="a" style="left:18.0px;top:484.8px;width:81.0px;height:1.6px;background:#3a3a3a;"></div>
<div class="a" style="left:18.0px;top:634.2px;width:81.0px;height:1.6px;background:#3a3a3a;"></div>
<svg style="left:33.0px;top:138.0px;" width="48" height="48"><rect x="2" y="2" width="42" height="42" fill="none" stroke="#f5b02e" stroke-width="3" stroke-dasharray="9.5 5.2" stroke-dashoffset="4"/><path d="M17 13 V34.5 L23 28 L33.5 26 Z" fill="#e9e9e9"/></svg>
<svg style="left:86.0px;top:181.0px;" width="10" height="10"><path d="M9 0 V9 H0 Z" fill="#9db4dd"/></svg>
<svg style="left:31.0px;top:205.0px;" width="50" height="50"><circle cx="25" cy="25" r="22.5" fill="none" stroke="#fff" stroke-width="3.2"/><circle cx="25" cy="25" r="22.5" fill="none" stroke="#a83d42" stroke-width="3.2" stroke-dasharray="8.8 8.87" stroke-dashoffset="4.4"/><path d="M25 11 V21 M25 29 V39 M11 25 H21 M29 25 H39" stroke="#d8d8d8" stroke-width="2"/></svg>
<svg style="left:32.0px;top:287.0px;" width="48" height="48"><g fill="#e0e0e0"><path d="M24 1 L30 10 H18Z M24 47 L30 38 H18Z M1 24 L10 18 V30Z M47 24 L38 18 V30Z"/><rect x="22" y="12" width="4" height="5.5"/><rect x="22" y="30.5" width="4" height="5.5"/><rect x="12" y="22" width="5.5" height="4"/><rect x="30.5" y="22" width="5.5" height="4"/></g></svg>
<svg style="left:32.0px;top:357.0px;" width="48" height="44"><g fill="none" stroke="#e6e6e6" stroke-width="2.4"><path d="M6 16 A20 20 0 0 1 41 14"/><path d="M42 30 A20 20 0 0 1 8 32"/></g><path d="M0.5 19 H12 L6.5 29Z M36 27 H47.5 L42 17Z" fill="#e6e6e6"/><path d="M24 15 L31 23 L24 31 L17 23Z" fill="#b8b8b8"/></svg>
<svg style="left:37.0px;top:432.0px;" width="38" height="38"><path d="M2 12 V1 H35 V34 H24" fill="none" stroke="#aaa" stroke-width="2.2"/><rect x="0" y="17" width="18" height="18" fill="#e6e6e6"/><path d="M20 15 L29 6 M22.5 5 H30 V12.5" fill="none" stroke="#fff" stroke-width="2.4"/></svg>
<svg style="left:86.0px;top:471.0px;" width="10" height="10"><path d="M9 0 V9 H0 Z" fill="#8a8a8a"/></svg>
<svg style="left:33.0px;top:497.0px;" width="46" height="46"><circle cx="23" cy="23" r="20" fill="none" stroke="#e6e6e6" stroke-width="2.2" stroke-dasharray="18 13.4" stroke-dashoffset="-6.7"/><rect x="15" y="15" width="16" height="16" fill="#e6e6e6"/><path d="M23 0.5 L28 9.5 H18Z M23 45.5 L28 36.5 H18Z M0.5 23 L9.5 18 V28Z M45.5 23 L36.5 18 V28Z" fill="#e6e6e6"/></svg>
<svg style="left:30.0px;top:578.0px;" width="54" height="46"><path d="M5 42 C14 48 22 43 28 38 C35 32 43 32 50 41" fill="none" stroke="#8fe0b0" stroke-width="2.6" stroke-linecap="round"/><g transform="rotate(-50 20 22)"><rect x="-4" y="16.5" width="40" height="11" fill="#e6e6e6"/><rect x="-4" y="16.5" width="3" height="11" fill="#2f2f2f" transform="translate(6 0)"/><rect x="27" y="16.5" width="2.4" height="11" fill="#2f2f2f"/></g></svg>
<svg style="left:86.0px;top:621.0px;" width="10" height="10"><path d="M9 0 V9 H0 Z" fill="#8a8a8a"/></svg>
<svg style="left:37.0px;top:646.0px;" width="44" height="48"><path d="M11 18 A24 24 0 0 1 35 42 H11Z" fill="#8fe0b0"/><path d="M11 15 A27 27 0 0 1 38 42" fill="none" stroke="#e6e6e6" stroke-width="1.8"/><rect x="1" y="1" width="10" height="46" fill="#e9e9e9"/><rect x="1" y="41" width="41" height="6" fill="#e9e9e9"/><path d="M5 5 H11 M5 9 H11 M5 13 H11 M5 17 H11 M5 21 H11 M5 25 H11 M5 29 H11 M5 33 H11 M5 37 H11 M14 41 V44 M18 41 V44 M22 41 V44 M26 41 V44 M30 41 V44 M34 41 V44 M38 41 V44" stroke="#2f2f2f" stroke-width="1.4"/></svg>
<div class="t" style="left:155.0px;top:129.6px;color:#fff;letter-spacing:-0.2px;text-shadow:0 1px 3px rgba(0,0,0,.8),0 0 2px rgba(0,0,0,.6);">User Perspective</div><div class="t" style="left:155.5px;top:169.6px;color:#fff;letter-spacing:-0.22px;text-shadow:0 1px 3px rgba(0,0,0,.8),0 0 2px rgba(0,0,0,.6);">(0) Object | Camera</div>
<svg style="left:0.0px;top:0.0px;pointer-events:none;" width="2736" height="1720"><circle cx="2113.2" cy="196.7" r="12" fill="#993949"/><circle cx="2113.2" cy="222.8" r="12" fill="#86d604"/><circle cx="2159.2" cy="271.9" r="12" fill="#2f67ad"/>
<path d="M2159.2 209.7 L2204.9 197" stroke="#638f24" stroke-width="4"/><circle cx="2204.9" cy="197" r="15" fill="#5f8b20"/>
<path d="M2159.2 209.7 L2204.2 222.8" stroke="#f9375c" stroke-width="4"/><path d="M2159.2 209.7 L2159.2 147.9" stroke="#2f8fff" stroke-width="4"/>
<circle cx="2204.2" cy="222.8" r="15" fill="#f9375c"/><circle cx="2159.2" cy="147.9" r="15" fill="#2f8fff"/></svg>
<div class="t" style="left:1859.2px;width:600px;text-align:center;top:137.1px;color:#000;font-size:19px;line-height:22px;letter-spacing:0px;text-shadow:none;">Z</div>
<div class="t" style="left:1904.9px;width:600px;text-align:center;top:186.2px;color:#000;font-size:19px;line-height:22px;letter-spacing:0px;text-shadow:none;">Y</div>
<div class="t" style="left:1904.2px;width:600px;text-align:center;top:212.0px;color:#000;font-size:19px;line-height:22px;letter-spacing:0px;text-shadow:none;">X</div>
<div class="a" style="left:2185.3px;top:292.1px;width:55.0px;height:55.0px;background:#303030;border-radius:28px;"></div>
<div class="a" style="left:2185.3px;top:352.9px;width:55.0px;height:55.0px;background:#303030;border-radius:28px;"></div>
<div class="a" style="left:2185.3px;top:414.0px;width:55.0px;height:55.0px;background:#303030;border-radius:28px;"></div>
<div class="a" style="left:2185.3px;top:474.1px;width:55.0px;height:55.0px;background:#303030;border-radius:28px;"></div>
<svg style="left:2193.0px;top:300.0px;" width="40" height="40"><circle cx="24.5" cy="15" r="12.2" fill="#ececec"/><path d="M16 23.5 L5.5 33.5" stroke="#ececec" stroke-width="4.4" stroke-linecap="round"/><path d="M24.5 8.5 V21.5 M18 15 H31" stroke="#303030" stroke-width="2.2"/></svg>
<svg style="left:2193.0px;top:361.0px;" width="40" height="40"><g stroke="#ececec" stroke-width="4.2" stroke-linecap="round" fill="none"><path d="M11 19 L9 8"/><path d="M17 17 L17 4"/><path d="M23.5 18 L26 5.5"/><path d="M29 21 L34 11"/><path d="M4 22 L11 28"/></g><path d="M9 18 H30 L31 24 C31 33 26 37 19.5 37 C13 37 10 33 7 27 Z" fill="#ececec"/></svg>
<svg style="left:2195.0px;top:424.0px;" width="36" height="36"><g transform="scale(1.2)"><path d="M2.5 11 A6 6 0 0 1 13 7 A7.4 7.4 0 1 1 25 15.5 H4 A6 6 0 0 1 2.5 11Z" fill="#ececec"/><circle cx="20" cy="9" r="2.4" fill="#333"/><circle cx="8" cy="11" r="1.8" fill="#333"/><path d="M7 17.5 H21 V27.5 H7 Z M22 22.5 L28.5 18.5 V27 Z M7 20 H3.5 V24 H7Z" fill="#ececec"/></g></svg>
<svg style="left:2195.0px;top:485.0px;" width="36" height="34"><path d="M8 2 H28 L34 31 H2 Z M2 31 H34 M5 17 H31 M7 9 H29 M14.5 2 L12 31 M21.5 2 L24 31" fill="none" stroke="#ececec" stroke-width="2.4" stroke-linejoin="round"/></svg>
<div class="a" style="left:2px;top:1569px;width:2256px;height:114px;border-radius:9px;overflow:hidden;background:#2b2b2b;">
<div class="a" style="left:0;top:0;width:100%;height:49.5px;background:#3a3a3a"></div>
<div class="a" style="left:0.0px;top:49.5px;width:82.0px;height:64.5px;background:#262626;"></div>
<div class="a" style="left:2173.6px;top:49.5px;width:90.0px;height:64.5px;background:#262626;"></div>
<div class="a" style="left:72.6px;top:49.5px;width:1.4px;height:64px;background:#313131"></div><div class="a" style="left:240.6px;top:49.5px;width:1.4px;height:64px;background:#313131"></div><div class="a" style="left:408.6px;top:49.5px;width:1.4px;height:64px;background:#313131"></div><div class="a" style="left:576.6px;top:49.5px;width:1.4px;height:64px;background:#313131"></div><div class="a" style="left:744.6px;top:49.5px;width:1.4px;height:64px;background:#313131"></div><div class="a" style="left:912.6px;top:49.5px;width:1.4px;height:64px;background:#313131"></div><div class="a" style="left:1080.6px;top:49.5px;width:1.4px;height:64px;background:#313131"></div><div class="a" style="left:1248.6px;top:49.5px;width:1.4px;height:64px;background:#313131"></div><div class="a" style="left:1416.6px;top:49.5px;width:1.4px;height:64px;background:#313131"></div><div class="a" style="left:1584.6px;top:49.5px;width:1.4px;height:64px;background:#313131"></div><div class="a" style="left:1752.6px;top:49.5px;width:1.4px;height:64px;background:#313131"></div><div class="a" style="left:1920.6px;top:49.5px;width:1.4px;height:64px;background:#313131"></div><div class="a" style="left:2088.6px;top:49.5px;width:1.4px;height:64px;background:#313131"></div>
</div>
<div class="a" style="left:17.4px;top:1575.8px;width:61.0px;height:37.0px;background:#2b2b2b;border-radius:6px;box-shadow:0 0 0 1px #444;"></div>
<svg style="left:25.0px;top:1580.0px;" width="30" height="30"><circle cx="14.5" cy="14.5" r="14" fill="#e4e4e4"/><path d="M18 7 L10 15.5 L15.5 22" fill="none" stroke="#2b2b2b" stroke-width="3.4" stroke-linecap="round" stroke-linejoin="round"/></svg>
<svg style="left:58.0px;top:1589.5px;" width="16" height="10"><path d="M2 2 L8.0 8 L14 2" fill="none" stroke="#b0b0b0" stroke-width="2.6" stroke-linecap="round" stroke-linejoin="round"/></svg>
<div class="a" style="left:91.6px;top:1575.8px;width:263.6px;height:37.0px;background:#2b2b2b;border-radius:6px;box-shadow:0 0 0 1px #444;"></div>
<div class="a" style="left:233.4px;top:1575.8px;width:1.4px;height:37.0px;background:#444;"></div>
<div class="t" style="left:106.2px;top:1581.7px;color:#dcdcdc;">Playback</div>
<svg style="left:213.5px;top:1589.5px;" width="16" height="10"><path d="M2 2 L8.0 8 L14 2" fill="none" stroke="#b0b0b0" stroke-width="2.6" stroke-linecap="round" stroke-linejoin="round"/></svg>
<div class="t" style="left:248.9px;top:1581.7px;color:#dcdcdc;">Keying</div>
<svg style="left:334.4px;top:1589.5px;" width="16" height="10"><path d="M2 2 L8.0 8 L14 2" fill="none" stroke="#b0b0b0" stroke-width="2.6" stroke-linecap="round" stroke-linejoin="round"/></svg>
<div class="t" style="left:370.7px;top:1581.7px;color:#dcdcdc;">View</div>
<div class="t" style="left:452.0px;top:1581.7px;color:#dcdcdc;">Marker</div>
<div class="a" style="left:964.8px;top:1576.0px;width:36.4px;height:36.5px;background:#555;border-radius:6px;"></div>
<svg style="left:973.0px;top:1584.5px;" width="20" height="20"><circle cx="10" cy="10" r="8" fill="#e4e4e4"/></svg>
<div class="a" style="left:1015.2px;top:1576.0px;width:236.2px;height:36.5px;background:#555;border-radius:6px;"></div>
<div class="a" style="left:1052.8px;top:1576.0px;width:1.5px;height:36.5px;background:#484848;"></div>
<div class="a" style="left:1091.4px;top:1576.0px;width:1.5px;height:36.5px;background:#484848;"></div>
<div class="a" style="left:1131.4px;top:1576.0px;width:1.5px;height:36.5px;background:#484848;"></div>
<div class="a" style="left:1171.6px;top:1576.0px;width:1.5px;height:36.5px;background:#484848;"></div>
<div class="a" style="left:1211.8px;top:1576.0px;width:1.5px;height:36.5px;background:#484848;"></div>
<svg style="left:1022.0px;top:1583.0px;" width="24" height="23"><rect x="2" y="2" width="3.4" height="19" fill="#e8e8e8"/><path d="M20 2 V21 L8 11.5Z" fill="#e8e8e8"/></svg>
<svg style="left:1057.0px;top:1583.0px;" width="32" height="23"><path d="M8.5 2 L16 11.5 L8.5 21 L1 11.5Z M31 3 V20 L17.5 11.5Z" fill="#e8e8e8"/></svg>
<svg style="left:1099.0px;top:1582.0px;" width="26" height="25"><path d="M22 1.5 V23.5 L3 12.5Z" fill="#e8e8e8"/></svg>
<svg style="left:1139.0px;top:1582.0px;" width="26" height="25"><path d="M4 1.5 V23.5 L23 12.5Z" fill="#e8e8e8"/></svg>
<svg style="left:1176.0px;top:1583.0px;" width="32" height="23"><path d="M23.5 2 L31 11.5 L23.5 21 L16 11.5Z M1 3 V20 L14.5 11.5Z" fill="#e8e8e8"/></svg>
<svg style="left:1219.0px;top:1583.0px;" width="24" height="23"><rect x="18.6" y="2" width="3.4" height="19" fill="#e8e8e8"/><path d="M4 2 V21 L16 11.5Z" fill="#e8e8e8"/></svg>
<div class="a" style="left:1672.9px;top:1576.0px;width:146.7px;height:36.5px;background:#555;border-radius:6px;"></div>
<div class="t" style="left:1445.8px;width:600px;text-align:center;top:1581.7px;color:#dcdcdc;">0</div>
<div class="a" style="left:1833.2px;top:1576.0px;width:387.2px;height:36.5px;background:#555;border-radius:6px;"></div>
<div class="a" style="left:1869.6px;top:1576.0px;width:1.5px;height:36.5px;background:#484848;"></div>
<div class="a" style="left:2050.0px;top:1576.0px;width:1.5px;height:36.5px;background:#484848;"></div>
<svg style="left:1838.0px;top:1580.0px;" width="30" height="30"><circle cx="14" cy="17" r="10.5" fill="none" stroke="#e8e8e8" stroke-width="2.2"/><path d="M9 3.5 H19 M14 3.5 V7 M14 10.5 V17 H20 M22 8.5 L25 5.5" fill="none" stroke="#e8e8e8" stroke-width="2.2"/></svg>
<div class="t" style="left:1901.5px;top:1581.7px;color:#dcdcdc;">Start</div>
<div class="t" style="right:712.0px;top:1581.7px;color:#dcdcdc;">1</div>
<div class="t" style="left:2082.0px;top:1581.7px;color:#dcdcdc;">End</div>
<div class="t" style="right:540.0px;top:1581.7px;color:#dcdcdc;">250</div>
<div class="t" style="left:-56.3px;width:600px;text-align:center;top:1630.0px;color:#a8a8a8;">20</div>
<div class="t" style="left:111.8px;width:600px;text-align:center;top:1630.0px;color:#a8a8a8;">40</div>
<div class="t" style="left:279.9px;width:600px;text-align:center;top:1630.0px;color:#a8a8a8;">60</div>
<div class="t" style="left:448.0px;width:600px;text-align:center;top:1630.0px;color:#a8a8a8;">80</div>
<div class="t" style="left:616.1px;width:600px;text-align:center;top:1630.0px;color:#a8a8a8;">100</div>
<div class="t" style="left:784.2px;width:600px;text-align:center;top:1630.0px;color:#a8a8a8;">120</div>
<div class="t" style="left:952.3px;width:600px;text-align:center;top:1630.0px;color:#a8a8a8;">140</div>
<div class="t" style="left:1120.4px;width:600px;text-align:center;top:1630.0px;color:#a8a8a8;">160</div>
<div class="t" style="left:1288.5px;width:600px;text-align:center;top:1630.0px;color:#a8a8a8;">180</div>
<div class="t" style="left:1456.6px;width:600px;text-align:center;top:1630.0px;color:#a8a8a8;">200</div>
<div class="t" style="left:1624.7px;width:600px;text-align:center;top:1630.0px;color:#a8a8a8;">220</div>
<div class="t" style="left:1792.8px;width:600px;text-align:center;top:1630.0px;color:#a8a8a8;">240</div>
<div class="a" style="left:50.0px;top:1623.4px;width:51.7px;height:35.0px;background:#5680c2;border-radius:7px;"></div>
<div class="t" style="left:-224.0px;width:600px;text-align:center;top:1630.0px;color:#fff;">0</div>
<div class="a" style="left:16.9px;top:1661.2px;width:2225.0px;height:16.4px;background:#666;border-radius:9px;box-shadow:0 0 0 1px #3a3a3a;"></div>
<div class="a" style="left:20.0px;top:1663.6px;width:11.6px;height:11.6px;background:#505050;border-radius:6px;"></div>
<div class="a" style="left:2227.0px;top:1663.6px;width:11.6px;height:11.6px;background:#505050;border-radius:6px;"></div>
<div class="a" style="left:74.9px;top:1679.2px;width:1.4px;height:3.2px;background:#4c4c4c;"></div>
<div class="a" style="left:158.9px;top:1679.2px;width:1.4px;height:3.2px;background:#4c4c4c;"></div>
<div class="a" style="left:243.0px;top:1679.2px;width:1.4px;height:3.2px;background:#4c4c4c;"></div>
<div class="a" style="left:327.1px;top:1679.2px;width:1.4px;height:3.2px;background:#4c4c4c;"></div>
<div class="a" style="left:411.1px;top:1679.2px;width:1.4px;height:3.2px;background:#4c4c4c;"></div>
<div class="a" style="left:495.2px;top:1679.2px;width:1.4px;height:3.2px;background:#4c4c4c;"></div>
<div class="a" style="left:579.2px;top:1679.2px;width:1.4px;height:3.2px;background:#4c4c4c;"></div>
<div class="a" style="left:663.2px;top:1679.2px;width:1.4px;height:3.2px;background:#4c4c4c;"></div>
<div class="a" style="left:747.3px;top:1679.2px;width:1.4px;height:3.2px;background:#4c4c4c;"></div>
<div class="a" style="left:831.3px;top:1679.2px;width:1.4px;height:3.2px;background:#4c4c4c;"></div>
<div class="a" style="left:915.4px;top:1679.2px;width:1.4px;height:3.2px;background:#4c4c4c;"></div>
<div class="a" style="left:999.4px;top:1679.2px;width:1.4px;height:3.2px;background:#4c4c4c;"></div>
<div class="a" style="left:1083.5px;top:1679.2px;width:1.4px;height:3.2px;background:#4c4c4c;"></div>
<div class="a" style="left:1167.5px;top:1679.2px;width:1.4px;height:3.2px;background:#4c4c4c;"></div>
<div class="a" style="left:1251.6px;top:1679.2px;width:1.4px;height:3.2px;background:#4c4c4c;"></div>
<div class="a" style="left:1335.6px;top:1679.2px;width:1.4px;height:3.2px;background:#4c4c4c;"></div>
<div class="a" style="left:1419.7px;top:1679.2px;width:1.4px;height:3.2px;background:#4c4c4c;"></div>
<div class="a" style="left:1503.7px;top:1679.2px;width:1.4px;height:3.2px;background:#4c4c4c;"></div>
<div class="a" style="left:1587.8px;top:1679.2px;width:1.4px;height:3.2px;background:#4c4c4c;"></div>
<div class="a" style="left:1671.8px;top:1679.2px;width:1.4px;height:3.2px;background:#4c4c4c;"></div>
<div class="a" style="left:1755.9px;top:1679.2px;width:1.4px;height:3.2px;background:#4c4c4c;"></div>
<div class="a" style="left:1839.9px;top:1679.2px;width:1.4px;height:3.2px;background:#4c4c4c;"></div>
<div class="a" style="left:1924.0px;top:1679.2px;width:1.4px;height:3.2px;background:#4c4c4c;"></div>
<div class="a" style="left:2008.0px;top:1679.2px;width:1.4px;height:3.2px;background:#4c4c4c;"></div>
<div class="a" style="left:2092.1px;top:1679.2px;width:1.4px;height:3.2px;background:#4c4c4c;"></div>
<div class="a" style="left:2176.2px;top:1679.2px;width:1.4px;height:3.2px;background:#4c4c4c;"></div>
<div class="a" style="left:2260.2px;top:1679.2px;width:1.4px;height:3.2px;background:#4c4c4c;"></div>
<div class="a" style="left:74.2px;top:1678.5px;width:3.0px;height:4.5px;background:#5680c2;"></div>
<div class="a" style="left:83.0px;top:1678.5px;width:1.6px;height:4.5px;background:#000;"></div>
<div class="a" style="left:2175.0px;top:1678.5px;width:1.6px;height:4.5px;background:#000;"></div>
<svg style="left:3.0px;top:1652.0px;" width="10" height="18"><path d="M1.5 1.5 L8 9 L1.5 16.5" fill="none" stroke="#8a8a8a" stroke-width="2.4"/></svg>
<svg style="left:2247.0px;top:1652.0px;" width="10" height="18"><path d="M8.5 1.5 L2 9 L8.5 16.5" fill="none" stroke="#8a8a8a" stroke-width="2.4"/></svg>
<div class="a" style="left:0.0px;top:1687.4px;width:2736.0px;height:33.0px;background:#303030;"></div>
<svg style="left:24.5px;top:1691.5px;" width="36" height="36"><path d="M7 1.2 H17 A5.5 5.5 0 0 1 22.5 6.7 V36 M1.5 36 V6.7 A5.5 5.5 0 0 1 7 1.2" fill="none" stroke="#b8b8b8" stroke-width="2.3"/><path d="M1 14.5 V6.5 A5.5 5.5 0 0 1 6.5 1 H12 V14.5Z" fill="#b8b8b8"/></svg>
<div class="t" style="left:68.2px;top:1691.0px;color:#bdbdbd;">Change Frame</div>
<svg style="left:244.5px;top:1691.5px;" width="36" height="36"><path d="M7 1.2 H17 A5.5 5.5 0 0 1 22.5 6.7 V36 M1.5 36 V6.7 A5.5 5.5 0 0 1 7 1.2" fill="none" stroke="#b8b8b8" stroke-width="2.3"/><path d="M1 14.5 V6.5 A5.5 5.5 0 0 1 6.5 1 H12 V14.5Z" fill="#b8b8b8"/><path d="M27.5 -1 V11 M32.5 3 V14" stroke="#b8b8b8" stroke-width="2.2"/></svg>
<div class="t" style="left:292.2px;top:1691.0px;color:#bdbdbd;">Box Select</div>
<svg style="left:563.0px;top:1691.5px;" width="36" height="36"><path d="M7 1.2 H17 A5.5 5.5 0 0 1 22.5 6.7 V36 M1.5 36 V6.7 A5.5 5.5 0 0 1 7 1.2" fill="none" stroke="#b8b8b8" stroke-width="2.3"/><rect x="9" y="4.5" width="6" height="10.5" rx="2" fill="#b8b8b8"/></svg>
<div class="t" style="left:607.0px;top:1691.0px;color:#bdbdbd;">Pan View</div>
<svg style="left:1101.5px;top:1691.5px;" width="36" height="36"><path d="M7 1.2 H17 A5.5 5.5 0 0 1 22.5 6.7 V36 M1.5 36 V6.7 A5.5 5.5 0 0 1 7 1.2" fill="none" stroke="#b8b8b8" stroke-width="2.3"/><path d="M23 14.5 V6.5 A5.5 5.5 0 0 0 17.5 1 H12 V14.5Z" fill="#b8b8b8"/></svg>
<div class="t" style="left:1145.8px;top:1691.0px;color:#bdbdbd;letter-spacing:-0.6px;">Dope Sheet Context Menu</div>
<div class="a" style="left:1657.0px;top:1688.0px;width:517.5px;height:32.0px;background:#273f75;border-radius:7px 7px 0 0;"></div>
<div class="a" style="left:1657.0px;top:1688.0px;width:40.0px;height:32.0px;background:#30498a;border-radius:7px 0 0 0;"></div>
<svg style="left:1663.0px;top:1690.0px;" width="30" height="30"><path d="M4 1 H24 A3 3 0 0 1 27 4 V19 A3 3 0 0 1 24 22 H12 L6 29 V22 H4 A3 3 0 0 1 1 19 V4 A3 3 0 0 1 4 1Z" fill="#e8e8e8"/><path d="M12 9.5 H15.5 V17 M11.5 17.5 H19 M14 4.8 V6.8" stroke="#273f75" stroke-width="2.6" fill="none"/></svg>
<div class="t" style="left:1719.5px;top:1691.0px;color:#ececec;letter-spacing:-0.47px;">Saved "Cycles_startup_2_MEDIUM.blend"</div>
<div class="t" style="left:2215.8px;top:1691.0px;color:#bdbdbd;letter-spacing:-0.26px;">Object | Camera | Verts:26 | Faces:14 | Tris:28 | Objects:0/6</div>
<div class="a" style="left:2265px;top:60px;width:469px;height:250.5px;border-radius:9px;overflow:hidden;background:#3c3c3c;">
<svg style="left:-2265px;top:-60px" width="2760" height="1720"><path d="M2396.2 140 L1604.2 330 M2437.0 140 L1944.2 330 M2464.6 140 L2174.2 330 M2485.0 140 L2344.2 330 M2523.4 140 L2664.2 330 M2543.8 140 L2834.2 330 M2571.4 140 L3064.2 330 M2612.2 140 L3404.2 330 M2260 150 H2740 M2260 165 H2740 M2260 185 H2740 M2260 212 H2740 M2260 262 H2740" stroke="#565656" stroke-opacity=".55" stroke-width="1.6" fill="none"/><path d="M2260 239.4 H2740" stroke="#a53a4b" stroke-opacity=".75" stroke-width="1.6"/><path d="M2504.2 100 V320" stroke="#6b9a27" stroke-width="2.2"/><path d="M2306.2 115.8 H2702.2 M2304.2 119.4 H2704.2 M2301.2 123.8 H2707.2 M2298.2 128.2 H2710.2 M2294.7 132.7 H2713.7 M2290.7 137.7 H2717.7 M2286.2 143.3 H2722.2 M2283.7 146.7 H2724.7 M2318.2 60 C2314.2 95 2299.2 130 2283.2 147 M2690.2 60 C2694.2 95 2709.2 130 2725.2 147" stroke="#0c0c0c" stroke-width="1.8" fill="none"/><path d="M2260 55 H2745 V315 H2260Z M2338.1 112.4 V305.2 H2681.6 V112.4Z" fill="#000" fill-opacity=".5" fill-rule="evenodd"/><path d="M2453 112.4 V305.2 M2567 112.4 V305.2" stroke="#6a6a6a" stroke-opacity=".6" stroke-width="1.4" stroke-dasharray="3 4" fill="none"/><path d="M2454.3 239.4L2504.2 219.5L2554.4 239.4" stroke="#555" stroke-width="1.4" fill="none"/><path d="M2504.2 149.7L2554.4 169.3L2554.4 239.4L2504.2 271.3L2454.3 239.4L2454.3 169.6Z M2454.3 169.6L2504.2 191.5L2554.4 169.3 M2504.2 191.5L2504.2 271.3" stroke="#0a0a0a" stroke-width="2" fill="none" stroke-linejoin="round"/><path d="M2504.2 191.5 V278" stroke="#0a0a0a" stroke-width="2.6"/><path d="M2458 239.4 H2546" stroke="#0a0a0a" stroke-width="2" stroke-dasharray="4 4"/><rect x="2338.1" y="112.4" width="343.5" height="192.79999999999998" fill="none" stroke="#ff8a8a" stroke-width="1.8" stroke-dasharray="3.2 3.2"/><path d="M2359.6 112.4 H2338.1 V133.9" stroke="#000" stroke-width="5" fill="none"/><path d="M2359.6 112.4 H2338.1 V133.9" stroke="#fff" stroke-width="2.6" fill="none"/><path d="M2660.1 112.4 H2681.6 V133.9" stroke="#000" stroke-width="5" fill="none"/><path d="M2660.1 112.4 H2681.6 V133.9" stroke="#fff" stroke-width="2.6" fill="none"/><path d="M2359.6 305.2 H2338.1 V283.7" stroke="#000" stroke-width="5" fill="none"/><path d="M2359.6 305.2 H2338.1 V283.7" stroke="#fff" stroke-width="2.6" fill="none"/><path d="M2660.1 305.2 H2681.6 V283.7" stroke="#000" stroke-width="5" fill="none"/><path d="M2660.1 305.2 H2681.6 V283.7" stroke="#fff" stroke-width="2.6" fill="none"/><circle cx="2504.6" cy="239.4" r="20.3" fill="none" stroke="#fff" stroke-width="2"/><circle cx="2504.6" cy="239.4" r="20.3" fill="none" stroke="#f01010" stroke-width="2" stroke-dasharray="8 8" stroke-dashoffset="4"/><path d="M2499.5 198.5 L2519.5 218.5 M2519.5 198.5 L2499.5 218.5" stroke="#000" stroke-width="6" fill="none"/><path d="M2499.5 198.5 L2519.5 218.5 M2519.5 198.5 L2499.5 218.5" stroke="#fff" stroke-width="3.2" fill="none"/><circle cx="2570.3" cy="209.9" r="11.6" fill="#993949"/><circle cx="2634.7" cy="274.7" r="11.6" fill="#2f67ad"/><path d="M2634.7 144.7 V190" stroke="#2f8fff" stroke-width="4"/><path d="M2655 209.9 H2700" stroke="#f9375c" stroke-width="4"/><circle cx="2634.7" cy="144.7" r="15" fill="#2f8fff"/><circle cx="2700.1" cy="209.9" r="15" fill="#f9375c"/><circle cx="2634.7" cy="209.9" r="13.5" fill="#8adc03" stroke="#6aa31a" stroke-width="3"/><circle cx="2691.5" cy="317" r="13" fill="#ddd"/></svg>
</div>
<div class="t" style="left:2334.7px;width:600px;text-align:center;top:133.9px;color:#000;font-size:19px;line-height:22px;letter-spacing:0px;text-shadow:none;">Z</div>
<div class="t" style="left:2334.7px;width:600px;text-align:center;top:199.1px;color:#000;font-size:19px;line-height:22px;letter-spacing:0px;text-shadow:none;">Y</div>
<div class="t" style="left:2400.1px;width:600px;text-align:center;top:199.1px;color:#000;font-size:19px;line-height:22px;letter-spacing:0px;text-shadow:none;">X</div>
<div class="a" style="left:2265px;top:60px;width:469px;height:50px;overflow:hidden">
<div class="a" style="left:14.5px;top:5.8px;width:63.2px;height:37.6px;background:rgba(46,46,46,.88);border-radius:6px;box-shadow:0 0 0 1px rgba(70,70,70,.8);"></div>
<div class="a" style="left:88.7px;top:5.8px;width:218.8px;height:37.6px;background:rgba(46,46,46,.88);border-radius:6px;box-shadow:0 0 0 1px rgba(70,70,70,.8);"></div>
<div class="a" style="left:319.9px;top:5.8px;width:77.7px;height:37.6px;background:rgba(46,46,46,.88);border-radius:6px;box-shadow:0 0 0 1px rgba(70,70,70,.8);"></div>
<div class="a" style="left:402.0px;top:5.8px;width:93.0px;height:37.6px;background:rgba(46,46,46,.88);border-radius:6px;box-shadow:0 0 0 1px rgba(70,70,70,.8);"></div>
</div>
<svg style="left:2288.0px;top:69.5px;" width="32" height="30"><g stroke="#d0d0d0" stroke-width="2.2" fill="none" stroke-linecap="round"><path d="M3 14 H14 M1 22 H27 M9 9 L5 28 M21 18 L24 28"/></g><circle cx="21" cy="9" r="7.6" fill="#dedede"/><path d="M16.5 8 A5 5 0 0 1 20 4.5" stroke="#2e2e2e" stroke-width="1.6" fill="none" stroke-linecap="round"/></svg>
<svg style="left:2321.0px;top:80.0px;" width="16" height="10"><path d="M2 2 L8.0 8 L14 2" fill="none" stroke="#b0b0b0" stroke-width="2.6" stroke-linecap="round" stroke-linejoin="round"/></svg>
<svg style="left:2362.6px;top:70.4px;" width="28" height="28"><g transform="scale(1.0)"><rect x="6.5" y="6.5" width="15" height="15" fill="#dcdcdc"/><path d="M1 8 V1 H8 M20 1 H27 V8 M27 20 V27 H20 M8 27 H1 V20" fill="none" stroke="#9a9a9a" stroke-width="2"/></g></svg>
<div class="t" style="left:2405.3px;top:71.0px;color:#d6d6d6;">Object Mode</div>
<svg style="left:2551.3px;top:80.0px;" width="16" height="10"><path d="M2 2 L8.0 8 L14 2" fill="none" stroke="#b0b0b0" stroke-width="2.6" stroke-linecap="round" stroke-linejoin="round"/></svg>
<div class="t" style="left:2598.0px;top:71.0px;color:#d6d6d6;">View</div>
<div class="a" style="left:2670px;top:62px;width:64px;height:44px;overflow:hidden"><div class="t" style="left:9.0px;top:9.4px;color:#d6d6d6;">Select</div></div>
<div class="t" style="left:2302.8px;top:128.7px;color:#fff;letter-spacing:-0.3px;text-shadow:0 1px 3px rgba(0,0,0,.8),0 0 2px rgba(0,0,0,.6);">Camera Perspective</div>
<div class="t" style="left:2303.3px;top:168.7px;color:#fff;letter-spacing:-0.22px;text-shadow:0 1px 3px rgba(0,0,0,.8),0 0 2px rgba(0,0,0,.6);">(0) Object | Camera</div>
<div class="a" style="left:2243.0px;top:139.0px;width:36.0px;height:28.0px;background:rgba(0,0,0,.28);border-radius:6px;"></div>
<svg style="left:2246.0px;top:145.5px;" width="12" height="16"><path d="M9.5 1 L2.5 8 L9.5 15" fill="none" stroke="#9a9a9a" stroke-width="2.6"/></svg>
<svg style="left:2264.0px;top:145.5px;" width="12" height="16"><path d="M2.5 1 L9.5 8 L2.5 15" fill="none" stroke="#9a9a9a" stroke-width="2.6"/></svg>
<div class="a" style="left:2720.0px;top:139.0px;width:14.0px;height:28.0px;background:rgba(0,0,0,.28);border-radius:6px 0 0 6px;"></div>
<svg style="left:2722.0px;top:145.5px;" width="10" height="16"><path d="M8 1 L2 8 L8 15" fill="none" stroke="#999" stroke-width="2.4"/></svg>
<div class="a" style="left:2265px;top:319px;width:469px;height:1048.6px;border-radius:9px;overflow:hidden;background:#424242;">
<div class="a" style="left:0;top:0;width:100%;height:48.6px;background:#3a3a3a"></div>
<div class="a" style="left:0;top:48.6px;width:56px;height:1100px;background:#232323"></div>
<div class="a" style="left:56px;top:169px;width:420px;height:393px;background:#383838"></div>
</div>
<div class="a" style="left:2280.4px;top:325.0px;width:61.3px;height:36.4px;background:#2b2b2b;border-radius:6px;box-shadow:0 0 0 1px #444;"></div>
<svg style="left:2288.0px;top:329.0px;" width="32" height="30"><rect x="1.5" y="1.5" width="26" height="11.5" rx="5.7" fill="#dedede"/><rect x="1.5" y="16.5" width="26" height="11.5" rx="5.7" fill="#dedede"/><rect x="14" y="4" width="11" height="6.5" rx="3.2" fill="#2b2b2b"/><rect x="4" y="19" width="11" height="6.5" rx="3.2" fill="#2b2b2b"/></svg>
<svg style="left:2321.0px;top:338.5px;" width="16" height="10"><path d="M2 2 L8.0 8 L14 2" fill="none" stroke="#b0b0b0" stroke-width="2.6" stroke-linecap="round" stroke-linejoin="round"/></svg>
<svg style="left:2371.0px;top:329.5px;" width="28" height="28"><g transform="scale(1.0)"><rect x="6.5" y="6.5" width="15" height="15" fill="#ececec"/><path d="M1 8 V1 H8 M20 1 H27 V8 M27 20 V27 H20 M8 27 H1 V20" fill="none" stroke="#9a9a9a" stroke-width="2"/></g></svg>
<div class="t" style="left:2417.2px;top:330.2px;color:#e0e0e0;">Camera</div>
<svg style="left:2530.0px;top:337.0px;" width="8" height="12"><path d="M1 1 L7 6 L1 11Z" fill="#4a4a4a"/></svg>
<svg style="left:2563.0px;top:328.0px;" width="31" height="31"><g transform="scale(1.0333333333333334)" fill="none" stroke="#e6e6e6" stroke-width="2.1" stroke-linejoin="round"><path d="M11.5 15 A6 6 0 1 1 13 7.5 A7.2 7.2 0 1 1 24 15 Z"/><circle cx="20.5" cy="8.5" r="1.8"/><circle cx="7.5" cy="11" r="0.9"/><path d="M8 18 H21.5 V27 H8 Z M21.5 22.5 L28 18.5 V27 Z M8 20.5 H4.5 V18 M4.5 20.5 V23"/></g></svg>
<div class="t" style="left:2611.2px;top:330.2px;color:#e0e0e0;">Camera</div>
<div class="a" style="left:2268.8px;top:386.2px;width:52.4px;height:52.2px;background:#2b2b2b;border-radius:7px 0 0 7px;"></div>
<div class="a" style="left:2268.8px;top:458.5px;width:52.4px;height:51.8px;background:#2b2b2b;border-radius:7px 0 0 7px;"></div>
<div class="a" style="left:2268.8px;top:513.4px;width:52.4px;height:53.9px;background:#2b2b2b;border-radius:7px 0 0 7px;"></div>
<div class="a" style="left:2268.8px;top:570.5px;width:52.4px;height:50.6px;background:#2b2b2b;border-radius:7px 0 0 7px;"></div>
<div class="a" style="left:2268.8px;top:626.4px;width:52.4px;height:52.8px;background:#2b2b2b;border-radius:7px 0 0 7px;"></div>
<div class="a" style="left:2268.8px;top:682.4px;width:52.4px;height:51.8px;background:#2b2b2b;border-radius:7px 0 0 7px;"></div>
<div class="a" style="left:2268.8px;top:754.3px;width:52.4px;height:51.7px;background:#2b2b2b;border-radius:7px 0 0 7px;"></div>
<div class="a" style="left:2268.8px;top:810.3px;width:52.4px;height:52.8px;background:#2b2b2b;border-radius:7px 0 0 7px;"></div>
<div class="a" style="left:2268.8px;top:866.3px;width:52.4px;height:52.8px;background:#2b2b2b;border-radius:7px 0 0 7px;"></div>
<div class="a" style="left:2268.8px;top:922.3px;width:52.4px;height:52.8px;background:#424242;border-radius:7px 0 0 7px;"></div>
<div class="a" style="left:2268.8px;top:994.1px;width:52.4px;height:52.9px;background:#2b2b2b;border-radius:7px 0 0 7px;"></div>
<svg style="left:2280.0px;top:397.0px;" width="30" height="30"><path d="M6 2 V11" stroke="#d2d2d2" stroke-width="2.2"/><ellipse cx="6" cy="20.5" rx="5.6" ry="6.8" fill="#d2d2d2"/><rect x="2.5" y="14" width="7" height="6" fill="#d2d2d2"/><path d="M22 12 V27" stroke="#d2d2d2" stroke-width="5" stroke-linecap="round"/><path d="M17.3 2.5 V8.5 C17.3 14.5 26.7 14.5 26.7 8.5 V2.5" fill="none" stroke="#d2d2d2" stroke-width="3.6"/><circle cx="22" cy="26" r="1.1" fill="#2b2b2b"/></svg>
<svg style="left:2280.0px;top:468.0px;" width="30" height="28"><path d="M1 8.5 C1 7.5 1.7 7 2.7 7 H7.5 L9.5 3 H18 L20 7 H26.3 C27.3 7 28 7.5 28 8.5 V25.5 C28 26.5 27.3 27 26.3 27 H2.7 C1.7 27 1 26.5 1 25.5Z" fill="#d2d2d2"/><rect x="10.5" y="4.6" width="6.5" height="2.4" fill="#2b2b2b"/><rect x="4" y="11" width="15.5" height="12.5" fill="#2b2b2b"/><path d="M4.5 14 H19 M4.5 17.3 H19 M4.5 20.6 H19" stroke="#777" stroke-width="1.8"/><circle cx="24" cy="13.5" r="2" fill="#2b2b2b"/><circle cx="24" cy="21" r="2" fill="#2b2b2b"/><path d="M23 2.2 H28" stroke="#d2d2d2" stroke-width="2"/></svg>
<svg style="left:2280.0px;top:524.0px;" width="30" height="30"><path d="M1.5 3 C1.5 1.5 2.5 1 4 1 H26 C27.5 1 28.5 1.5 28.5 3 V13 H24 V8 H6 V13 H1.5Z" fill="#d2d2d2"/><path d="M7 9 H23 V28 H7Z" fill="#d2d2d2"/><path d="M10 25 L15 17 L20 25Z" fill="#2b2b2b"/><circle cx="19.5" cy="14" r="1.8" fill="#2b2b2b"/></svg>
<svg style="left:2280.0px;top:581.0px;" width="30" height="30"><path d="M1.5 9 V28.5 H21" fill="none" stroke="#d2d2d2" stroke-width="1.7"/><path d="M5 6 V25 H24" fill="none" stroke="#d2d2d2" stroke-width="1.7"/><rect x="9" y="1.5" width="19.5" height="19.5" fill="none" stroke="#d2d2d2" stroke-width="2.2"/><path d="M10 20 L17 9 L21 15 L23 13 L27.5 20Z" fill="#d2d2d2"/><circle cx="23.5" cy="6.5" r="1.9" fill="#d2d2d2"/></svg>
<svg style="left:2280.0px;top:637.0px;" width="30" height="30"><path d="M8 1.5 C11 8 15 15 15 20 C15 26 1 26 1 20 C1 15 5 8 8 1.5Z" fill="#d2d2d2"/><circle cx="25" cy="5.5" r="3.8" fill="#d2d2d2"/><circle cx="21.5" cy="21.5" r="6.6" fill="#2b2b2b" stroke="#d2d2d2" stroke-width="2.3"/><path d="M18 20 A4 4 0 0 1 22 17.5" stroke="#d2d2d2" stroke-width="1.5" fill="none"/></svg>
<svg style="left:2280.0px;top:693.0px;" width="30" height="30"><circle cx="14.5" cy="15" r="12.5" fill="none" stroke="#d4606e" stroke-width="2.2"/><path d="M6 8 C10 5 13 7 12 10 C11 13 8 12 7 15 C6 18 4 14 4 12Z M13 16 C16 14 20 15 22 18 C21 22 18 25 15 26 C15 22 12 20 13 16Z" fill="#d4606e"/><path d="M1 28 L6 23 M24 6 L28.5 1.5" stroke="#d4606e" stroke-width="2.2" stroke-linecap="round"/></svg>
<svg style="left:2281.0px;top:766.0px;" width="28" height="28"><g transform="scale(1.0)"><rect x="6.5" y="6.5" width="15" height="15" fill="#e2924b"/><path d="M1 8 V1 H8 M20 1 H27 V8 M27 20 V27 H20 M8 27 H1 V20" fill="none" stroke="#c57a3c" stroke-width="2"/></g></svg>
<svg style="left:2280.0px;top:822.0px;" width="30" height="30"><path d="M24 22 A12 12 0 1 1 18 4" fill="none" stroke="#5c8fd6" stroke-width="2.2" stroke-linecap="round"/><circle cx="14.5" cy="15" r="5.6" fill="#6a9ee4"/><circle cx="24.5" cy="4.5" r="3.6" fill="#4f7fc4"/></svg>
<svg style="left:2280.0px;top:877.0px;" width="30" height="30"><path d="M3 20 C1 14 6 10 12 9.5 L23 1.5 C27 0 30 3 28 7 L22 20 C19 28 6 29 3 20Z" fill="none" stroke="#6a9ee4" stroke-width="2.4"/><circle cx="12" cy="18.5" r="4.8" fill="none" stroke="#6a9ee4" stroke-width="3.2"/><circle cx="23.5" cy="6" r="1.5" fill="#6a9ee4"/></svg>
<svg style="left:2279.0px;top:933.0px;" width="31" height="31"><g transform="scale(1.0333333333333334)" fill="none" stroke="#1fd8a4" stroke-width="2.1" stroke-linejoin="round"><path d="M11.5 15 A6 6 0 1 1 13 7.5 A7.2 7.2 0 1 1 24 15 Z"/><circle cx="20.5" cy="8.5" r="1.8"/><circle cx="7.5" cy="11" r="0.9"/><path d="M8 18 H21.5 V27 H8 Z M21.5 22.5 L28 18.5 V27 Z M8 20.5 H4.5 V18 M4.5 20.5 V23"/></g></svg>
<svg style="left:2280.5px;top:1005.0px;" width="30" height="30"><rect x="1" y="1" width="7" height="7" fill="#d4606e"/><rect x="1" y="8" width="7" height="7" fill="#2a1a1c"/><rect x="1" y="15" width="7" height="7" fill="#d4606e"/><rect x="1" y="22" width="7" height="7" fill="#2a1a1c"/><rect x="8" y="1" width="7" height="7" fill="#2a1a1c"/><rect x="8" y="8" width="7" height="7" fill="#d4606e"/><rect x="8" y="15" width="7" height="7" fill="#2a1a1c"/><rect x="8" y="22" width="7" height="7" fill="#d4606e"/><rect x="15" y="1" width="7" height="7" fill="#d4606e"/><rect x="15" y="8" width="7" height="7" fill="#2a1a1c"/><rect x="15" y="15" width="7" height="7" fill="#d4606e"/><rect x="15" y="22" width="7" height="7" fill="#2a1a1c"/><rect x="22" y="1" width="7" height="7" fill="#2a1a1c"/><rect x="22" y="8" width="7" height="7" fill="#d4606e"/><rect x="22" y="15" width="7" height="7" fill="#2a1a1c"/><rect x="22" y="22" width="7" height="7" fill="#d4606e"/><rect x="1" y="1" width="28" height="28" fill="none" stroke="#d4606e" stroke-width="1.6"/></svg>
<div class="a" style="left:2339.0px;top:385.6px;width:379.2px;height:36.5px;background:#2b2b2b;border-radius:6px;box-shadow:0 0 0 1px #3a3a3a;"></div>
<div class="a" style="left:2400.5px;top:385.6px;width:277.6px;height:36.5px;background:#1d1d1d;"></div>
<div class="a" style="left:2679.5px;top:385.6px;width:38.7px;height:36.5px;background:#545454;border-radius:0 6px 6px 0;"></div>
<svg style="left:2344.0px;top:387.5px;" width="31" height="31"><g transform="scale(1.0333333333333334)" fill="none" stroke="#e6e6e6" stroke-width="2.1" stroke-linejoin="round"><path d="M11.5 15 A6 6 0 1 1 13 7.5 A7.2 7.2 0 1 1 24 15 Z"/><circle cx="20.5" cy="8.5" r="1.8"/><circle cx="7.5" cy="11" r="0.9"/><path d="M8 18 H21.5 V27 H8 Z M21.5 22.5 L28 18.5 V27 Z M8 20.5 H4.5 V18 M4.5 20.5 V23"/></g></svg>
<svg style="left:2379.5px;top:399.5px;" width="16" height="10"><path d="M2 2 L8.0 8 L14 2" fill="none" stroke="#b0b0b0" stroke-width="2.6" stroke-linecap="round" stroke-linejoin="round"/></svg>
<div class="t" style="left:2414.2px;top:390.0px;color:#e6e6e6;">Camera</div>
<svg style="left:2685.0px;top:390.0px;" width="28" height="28"><path d="M14 2 C10 5 6 6 2 6 C2 16 5 22 14 27 C23 22 26 16 26 6 C22 6 18 5 14 2Z" fill="none" stroke="#9c9c9c" stroke-width="2.2" stroke-linejoin="round"/></svg>
<svg style="left:2338.5px;top:457.8px;" width="14" height="14"><path d="M0.5 1 H13.5 L7 12.5Z" fill="#a0a0a0"/></svg>
<div class="t" style="left:2364.5px;top:451.1px;color:#e0e0e0;font-size:24px;line-height:28px;">Lens</div>
<svg style="left:2698.0px;top:459.5px;" width="24" height="10"><rect x="0.0" y="0" width="2.6" height="2.6" fill="#1e1e1e"/><rect x="0.0" y="6" width="2.6" height="2.6" fill="#1e1e1e"/><rect x="6.2" y="0" width="2.6" height="2.6" fill="#1e1e1e"/><rect x="6.2" y="6" width="2.6" height="2.6" fill="#1e1e1e"/><rect x="12.4" y="0" width="2.6" height="2.6" fill="#1e1e1e"/><rect x="12.4" y="6" width="2.6" height="2.6" fill="#1e1e1e"/><rect x="18.6" y="0" width="2.6" height="2.6" fill="#1e1e1e"/><rect x="18.6" y="6" width="2.6" height="2.6" fill="#1e1e1e"/></svg>
<div class="t" style="right:243.5px;top:509.8px;color:#e0e0e0;">Type</div>
<div class="a" style="left:2510.1px;top:506.0px;width:168.0px;height:36.0px;background:#2b2b2b;border-radius:6px;box-shadow:0 0 0 1px #3d3d3d;"></div>
<div class="t" style="left:2523.3px;top:509.8px;color:#e0e0e0;">Perspective</div>
<svg style="left:2658.5px;top:519.5px;" width="16" height="10"><path d="M2 2 L8.0 8 L14 2" fill="none" stroke="#b0b0b0" stroke-width="2.6" stroke-linecap="round" stroke-linejoin="round"/></svg>
<svg style="left:2695.5px;top:519.5px;" width="9" height="9"><circle cx="4.5" cy="4.5" r="4.2" fill="#d8d8d8"/></svg>
<div class="t" style="right:243.5px;top:582.1px;color:#e0e0e0;">Focal Length</div>
<div class="a" style="left:2510.1px;top:577.9px;width:168.0px;height:36.3px;background:#595959;border-radius:6px;box-shadow:0 0 0 1px #3d3d3d;"></div>
<div class="t" style="left:2294.1px;width:600px;text-align:center;top:582.1px;color:#e6e6e6;">50 mm</div>
<svg style="left:2695.5px;top:591.5px;" width="9" height="9"><circle cx="4.5" cy="4.5" r="4.2" fill="#d8d8d8"/></svg>
<div class="t" style="right:243.5px;top:626.0px;color:#e0e0e0;">Lens Unit</div>
<div class="a" style="left:2510.1px;top:622.2px;width:168.0px;height:35.9px;background:#2b2b2b;border-radius:6px;box-shadow:0 0 0 1px #3d3d3d;"></div>
<div class="t" style="left:2523.3px;top:626.0px;color:#e0e0e0;">Millimeters</div>
<svg style="left:2658.5px;top:635.7px;" width="16" height="10"><path d="M2 2 L8.0 8 L14 2" fill="none" stroke="#b0b0b0" stroke-width="2.6" stroke-linecap="round" stroke-linejoin="round"/></svg>
<svg style="left:2695.5px;top:635.7px;" width="9" height="9"><circle cx="4.5" cy="4.5" r="4.2" fill="#d8d8d8"/></svg>
<div class="t" style="right:243.5px;top:692.5px;color:#e0e0e0;">Shift X</div>
<div class="a" style="left:2510.1px;top:688.3px;width:168.0px;height:36.3px;background:#595959;border-radius:6px 6px 0 0;box-shadow:0 0 0 1px #3d3d3d;"></div>
<div class="t" style="left:2294.1px;width:600px;text-align:center;top:692.5px;color:#e6e6e6;">0.000</div>
<svg style="left:2695.5px;top:702.0px;" width="9" height="9"><circle cx="4.5" cy="4.5" r="4.2" fill="#d8d8d8"/></svg>
<div class="t" style="right:243.5px;top:731.7px;color:#e0e0e0;">Y</div>
<div class="a" style="left:2510.1px;top:726.2px;width:168.0px;height:37.6px;background:#595959;border-radius:0 0 6px 6px;box-shadow:0 0 0 1px #3d3d3d;"></div>
<div class="t" style="left:2294.1px;width:600px;text-align:center;top:731.7px;color:#e6e6e6;">-0.700</div>
<svg style="left:2695.5px;top:740.5px;" width="9" height="9"><circle cx="4.5" cy="4.5" r="4.2" fill="#d8d8d8"/></svg>
<div class="t" style="right:243.5px;top:792.3px;color:#e0e0e0;">Clip Start</div>
<div class="a" style="left:2510.1px;top:788.1px;width:168.0px;height:36.3px;background:#595959;border-radius:6px 6px 0 0;box-shadow:0 0 0 1px #3d3d3d;"></div>
<div class="t" style="left:2294.1px;width:600px;text-align:center;top:792.3px;color:#e6e6e6;">0.1 mm</div>
<svg style="left:2695.5px;top:801.8px;" width="9" height="9"><circle cx="4.5" cy="4.5" r="4.2" fill="#d8d8d8"/></svg>
<div class="t" style="right:243.5px;top:832.0px;color:#e0e0e0;">End</div>
<div class="a" style="left:2510.1px;top:826.1px;width:168.0px;height:37.6px;background:#595959;border-radius:0 0 6px 6px;box-shadow:0 0 0 1px #3d3d3d;"></div>
<div class="t" style="left:2294.1px;width:600px;text-align:center;top:832.0px;color:#e6e6e6;">10000 mm</div>
<svg style="left:2695.5px;top:840.4px;" width="9" height="9"><circle cx="4.5" cy="4.5" r="4.2" fill="#d8d8d8"/></svg>
<svg style="left:2339.0px;top:899.4px;" width="14" height="14"><path d="M1 1 L12.5 7 L1 13Z" fill="#a0a0a0"/></svg>
<div class="t" style="left:2364.5px;top:893.7px;color:#e0e0e0;font-size:24px;line-height:28px;">Camera</div>
<svg style="left:2649.0px;top:892.9px;" width="30" height="28"><circle cx="3.6" cy="4" r="3" fill="#dcdcdc"/><circle cx="3.6" cy="14" r="3" fill="#dcdcdc"/><circle cx="3.6" cy="24" r="3" fill="#dcdcdc"/><path d="M12.5 4 H29 M12.5 14 H29 M12.5 24 H29" stroke="#dcdcdc" stroke-width="2.2"/></svg>
<svg style="left:2698.0px;top:903.1px;" width="24" height="10"><rect x="0.0" y="0" width="2.6" height="2.6" fill="#1e1e1e"/><rect x="0.0" y="6" width="2.6" height="2.6" fill="#1e1e1e"/><rect x="6.2" y="0" width="2.6" height="2.6" fill="#1e1e1e"/><rect x="6.2" y="6" width="2.6" height="2.6" fill="#1e1e1e"/><rect x="12.4" y="0" width="2.6" height="2.6" fill="#1e1e1e"/><rect x="12.4" y="6" width="2.6" height="2.6" fill="#1e1e1e"/><rect x="18.6" y="0" width="2.6" height="2.6" fill="#1e1e1e"/><rect x="18.6" y="6" width="2.6" height="2.6" fill="#1e1e1e"/></svg>
<svg style="left:2339.0px;top:947.0px;" width="14" height="14"><path d="M1 1 L12.5 7 L1 13Z" fill="#a0a0a0"/></svg>
<div class="a" style="left:2369.1px;top:942.0px;width:23.7px;height:23.7px;background:#666;border-radius:4.5px;box-shadow:0 0 0 1px #3c3c3c;"></div>
<div class="t" style="left:2405.5px;top:941.3px;color:#e0e0e0;font-size:24px;line-height:28px;">Safe Areas</div>
<svg style="left:2649.0px;top:940.5px;" width="30" height="28"><circle cx="3.6" cy="4" r="3" fill="#dcdcdc"/><circle cx="3.6" cy="14" r="3" fill="#dcdcdc"/><circle cx="3.6" cy="24" r="3" fill="#dcdcdc"/><path d="M12.5 4 H29 M12.5 14 H29 M12.5 24 H29" stroke="#dcdcdc" stroke-width="2.2"/></svg>
<svg style="left:2698.0px;top:950.7px;" width="24" height="10"><rect x="0.0" y="0" width="2.6" height="2.6" fill="#1e1e1e"/><rect x="0.0" y="6" width="2.6" height="2.6" fill="#1e1e1e"/><rect x="6.2" y="0" width="2.6" height="2.6" fill="#1e1e1e"/><rect x="6.2" y="6" width="2.6" height="2.6" fill="#1e1e1e"/><rect x="12.4" y="0" width="2.6" height="2.6" fill="#1e1e1e"/><rect x="12.4" y="6" width="2.6" height="2.6" fill="#1e1e1e"/><rect x="18.6" y="0" width="2.6" height="2.6" fill="#1e1e1e"/><rect x="18.6" y="6" width="2.6" height="2.6" fill="#1e1e1e"/></svg>
<svg style="left:2339.0px;top:995.1px;" width="14" height="14"><path d="M1 1 L12.5 7 L1 13Z" fill="#a0a0a0"/></svg>
<div class="a" style="left:2369.1px;top:990.1px;width:23.7px;height:23.7px;background:#666;border-radius:4.5px;box-shadow:0 0 0 1px #3c3c3c;"></div>
<div class="t" style="left:2405.5px;top:989.4px;color:#e0e0e0;font-size:24px;line-height:28px;">Background Images</div>
<svg style="left:2698.0px;top:998.8px;" width="24" height="10"><rect x="0.0" y="0" width="2.6" height="2.6" fill="#1e1e1e"/><rect x="0.0" y="6" width="2.6" height="2.6" fill="#1e1e1e"/><rect x="6.2" y="0" width="2.6" height="2.6" fill="#1e1e1e"/><rect x="6.2" y="6" width="2.6" height="2.6" fill="#1e1e1e"/><rect x="12.4" y="0" width="2.6" height="2.6" fill="#1e1e1e"/><rect x="12.4" y="6" width="2.6" height="2.6" fill="#1e1e1e"/><rect x="18.6" y="0" width="2.6" height="2.6" fill="#1e1e1e"/><rect x="18.6" y="6" width="2.6" height="2.6" fill="#1e1e1e"/></svg>
<svg style="left:2339.0px;top:1043.1px;" width="14" height="14"><path d="M1 1 L12.5 7 L1 13Z" fill="#a0a0a0"/></svg>
<div class="t" style="left:2364.5px;top:1037.4px;color:#e0e0e0;font-size:24px;line-height:28px;">Viewport Display</div>
<svg style="left:2698.0px;top:1046.8px;" width="24" height="10"><rect x="0.0" y="0" width="2.6" height="2.6" fill="#1e1e1e"/><rect x="0.0" y="6" width="2.6" height="2.6" fill="#1e1e1e"/><rect x="6.2" y="0" width="2.6" height="2.6" fill="#1e1e1e"/><rect x="6.2" y="6" width="2.6" height="2.6" fill="#1e1e1e"/><rect x="12.4" y="0" width="2.6" height="2.6" fill="#1e1e1e"/><rect x="12.4" y="6" width="2.6" height="2.6" fill="#1e1e1e"/><rect x="18.6" y="0" width="2.6" height="2.6" fill="#1e1e1e"/><rect x="18.6" y="6" width="2.6" height="2.6" fill="#1e1e1e"/></svg>
<svg style="left:2339.0px;top:1091.3px;" width="14" height="14"><path d="M1 1 L12.5 7 L1 13Z" fill="#a0a0a0"/></svg>
<div class="a" style="left:2369.1px;top:1086.3px;width:23.7px;height:23.7px;background:#666;border-radius:4.5px;box-shadow:0 0 0 1px #3c3c3c;"></div>
<div class="t" style="left:2405.5px;top:1085.6px;color:#e0e0e0;font-size:24px;line-height:28px;">Depth of Field</div>
<svg style="left:2698.0px;top:1095.0px;" width="24" height="10"><rect x="0.0" y="0" width="2.6" height="2.6" fill="#1e1e1e"/><rect x="0.0" y="6" width="2.6" height="2.6" fill="#1e1e1e"/><rect x="6.2" y="0" width="2.6" height="2.6" fill="#1e1e1e"/><rect x="6.2" y="6" width="2.6" height="2.6" fill="#1e1e1e"/><rect x="12.4" y="0" width="2.6" height="2.6" fill="#1e1e1e"/><rect x="12.4" y="6" width="2.6" height="2.6" fill="#1e1e1e"/><rect x="18.6" y="0" width="2.6" height="2.6" fill="#1e1e1e"/><rect x="18.6" y="6" width="2.6" height="2.6" fill="#1e1e1e"/></svg>
<svg style="left:2339.0px;top:1139.3px;" width="14" height="14"><path d="M1 1 L12.5 7 L1 13Z" fill="#a0a0a0"/></svg>
<div class="t" style="left:2364.5px;top:1133.6px;color:#e0e0e0;font-size:24px;line-height:28px;">Custom Properties</div>
<svg style="left:2698.0px;top:1143.0px;" width="24" height="10"><rect x="0.0" y="0" width="2.6" height="2.6" fill="#1e1e1e"/><rect x="0.0" y="6" width="2.6" height="2.6" fill="#1e1e1e"/><rect x="6.2" y="0" width="2.6" height="2.6" fill="#1e1e1e"/><rect x="6.2" y="6" width="2.6" height="2.6" fill="#1e1e1e"/><rect x="12.4" y="0" width="2.6" height="2.6" fill="#1e1e1e"/><rect x="12.4" y="6" width="2.6" height="2.6" fill="#1e1e1e"/><rect x="18.6" y="0" width="2.6" height="2.6" fill="#1e1e1e"/><rect x="18.6" y="6" width="2.6" height="2.6" fill="#1e1e1e"/></svg>
<div class="a" style="left:2265px;top:1375.2px;width:469px;height:306.20000000000005px;border-radius:9px;overflow:hidden;background:#282828;">
<div class="a" style="left:0;top:0;width:100%;height:49.6px;background:#3a3a3a"></div>
<div class="a" style="left:0;top:49.6px;width:100%;height:40px;background:#2a2a2a"></div>
<div class="a" style="left:0;top:89.6px;width:100%;height:40px;background:#2e2e2e"></div>
<div class="a" style="left:0;top:129.6px;width:100%;height:40px;background:#282828"></div>
<div class="a" style="left:0;top:169.6px;width:100%;height:40px;background:#2e2e2e"></div>
<div class="a" style="left:0;top:209.6px;width:100%;height:40px;background:#282828"></div>
<div class="a" style="left:0;top:249.6px;width:100%;height:40px;background:#2e2e2e"></div>
<div class="a" style="left:0;top:289.6px;width:100%;height:40px;background:#282828"></div>
</div>
<div class="a" style="left:2281.2px;top:1381.4px;width:60.2px;height:37.0px;background:#2b2b2b;border-radius:6px;box-shadow:0 0 0 1px #444;"></div>
<svg style="left:2321.5px;top:1395.5px;" width="16" height="10"><path d="M2 2 L8.0 8 L14 2" fill="none" stroke="#b0b0b0" stroke-width="2.6" stroke-linecap="round" stroke-linejoin="round"/></svg>
<svg style="left:2288.0px;top:1385.0px;" width="30" height="30"><rect x="1" y="1" width="10" height="5.5" rx="1" fill="#dcdcdc"/><rect x="14" y="12" width="14" height="6" rx="1" fill="#dcdcdc"/><rect x="14" y="22.5" width="14" height="6" rx="1" fill="#dcdcdc"/><path d="M5 7 V25.5 H12 M5 15 H12" fill="none" stroke="#aaa" stroke-width="1.8"/></svg>
<div class="a" style="left:2354.5px;top:1381.4px;width:61.0px;height:37.0px;background:#2b2b2b;border-radius:6px;box-shadow:0 0 0 1px #444;"></div>
<svg style="left:2395.5px;top:1395.5px;" width="16" height="10"><path d="M2 2 L8.0 8 L14 2" fill="none" stroke="#b0b0b0" stroke-width="2.6" stroke-linecap="round" stroke-linejoin="round"/></svg>
<svg style="left:2362.0px;top:1385.0px;" width="30" height="30"><path d="M1.5 9 V28.5 H21" fill="none" stroke="#cfcfcf" stroke-width="1.7"/><path d="M5 6 V25 H24" fill="none" stroke="#cfcfcf" stroke-width="1.7"/><rect x="9" y="1.5" width="19.5" height="19.5" fill="none" stroke="#d8d8d8" stroke-width="2.2"/><path d="M10 20 L17 9 L21 15 L23 13 L27.5 20Z" fill="#d8d8d8"/><circle cx="23.5" cy="6.5" r="1.9" fill="#d8d8d8"/></svg>
<div class="a" style="left:2451.1px;top:1381.4px;width:229.2px;height:37.0px;background:#1d1d1d;border-radius:6px;box-shadow:0 0 0 1px #3a3a3a;"></div>
<svg style="left:2459.0px;top:1385.0px;" width="30" height="30"><circle cx="18" cy="11" r="8.5" fill="none" stroke="#e0e0e0" stroke-width="2.4"/><path d="M12 17.5 L2 27.5" stroke="#e0e0e0" stroke-width="2.6" stroke-linecap="round"/></svg>
<div class="a" style="left:2716.0px;top:1381.4px;width:30.0px;height:37.0px;background:#2b2b2b;border-radius:6px 0 0 6px;box-shadow:0 0 0 1px #444;clip-path:inset(-2px 12px -2px -2px);"></div>
<div class="a" style="left:2716px;top:1381px;width:18px;height:38px;overflow:hidden"><svg style="left:4.0px;top:5.0px;" width="30" height="30"><path d="M1 1 H27 L17 14 V27 L11 22 V14Z" fill="none" stroke="#dcdcdc" stroke-width="2.4" stroke-linejoin="round"/></svg></div>
<svg style="left:2310.0px;top:1431.5px;" width="28" height="28"><rect x="1.2" y="1.2" width="25.6" height="6.2" fill="none" stroke="#d8d8d8" stroke-width="2.2"/><path d="M3.5 7.5 V26.5 H24.5 V7.5" fill="none" stroke="#d8d8d8" stroke-width="2.2"/><rect x="10.5" y="12.5" width="7" height="3.4" rx="1.4" fill="#d8d8d8"/></svg>
<div class="t" style="left:2352.2px;top:1433.7px;color:#cdcdcd;">Scene Collection</div>
<svg style="left:2317.5px;top:1479.5px;" width="12" height="12"><path d="M0 1 H12 L6 11Z" fill="#b0b0b0"/></svg>
<div class="a" style="left:2354.0px;top:1475.0px;width:20.0px;height:20.0px;background:#d4d4d4;border-radius:3px;"></div><svg style="left:2354.0px;top:1475.0px;" width="20" height="20"><path d="M4 10 L8.5 14.5 L16.5 5" fill="none" stroke="#1d1d1d" stroke-width="3"/></svg>
<div class="a" style="left:2384.0px;top:1466.8px;width:40.3px;height:35.0px;background:#4a4a4a;border-radius:8px;box-shadow:inset 0 0 0 1.5px #5f5f5f;"></div>
<svg style="left:2390.2px;top:1471.0px;" width="28" height="28"><rect x="1.2" y="1.2" width="25.6" height="6.2" fill="none" stroke="#d8d8d8" stroke-width="2.2"/><path d="M3.5 7.5 V26.5 H24.5 V7.5" fill="none" stroke="#d8d8d8" stroke-width="2.2"/><rect x="10.5" y="12.5" width="7" height="3.4" rx="1.4" fill="#d8d8d8"/></svg>
<div class="t" style="left:2432.5px;top:1473.1px;color:#cdcdcd;">Object</div>
<svg style="left:2686.2px;top:1474.5px;" width="27" height="18"><path d="M0.5 9 C6 -1.5 21 -1.5 26.5 9 C21 19.5 6 19.5 0.5 9Z" fill="#e6e6e6"/><circle cx="13.5" cy="9" r="6.3" fill="#2b2b2b"/><circle cx="13.5" cy="9" r="3" fill="#e6e6e6"/></svg>
<svg style="left:2360.0px;top:1494.0px;" width="40" height="36"><path d="M3.5 0 V31.2 H36" fill="none" stroke="#8a8a8a" stroke-width="1.6"/></svg>
<svg style="left:2358.5px;top:1519.2px;" width="12" height="12"><path d="M1 0 L11.5 6 L1 12Z" fill="#c0c0c0"/></svg>
<svg style="left:2390.2px;top:1509.5px;" width="28" height="28"><path d="M3 3 H25 L14 25Z" fill="none" stroke="#e2924b" stroke-width="5" stroke-linejoin="round"/></svg>
<div class="t" style="left:2432.5px;top:1513.3px;color:#cdcdcd;">Cube</div>
<svg style="left:2686.2px;top:1514.5px;" width="27" height="18"><path d="M0.5 9 C6 -1.5 21 -1.5 26.5 9 C21 19.5 6 19.5 0.5 9Z" fill="#e6e6e6"/><circle cx="13.5" cy="9" r="6.3" fill="#2b2b2b"/><circle cx="13.5" cy="9" r="3" fill="#e6e6e6"/></svg>
<svg style="left:2532.0px;top:1509.0px;" width="28" height="28"><path d="M4 4 H24 L14 24Z" fill="none" stroke="#1fc8a0" stroke-width="2"/><rect x="1" y="1" width="6" height="6" fill="#282828" stroke="#1fc8a0" stroke-width="1.8"/><rect x="21" y="1" width="6" height="6" fill="#282828" stroke="#1fc8a0" stroke-width="1.8"/><rect x="11" y="21" width="6" height="6" fill="#282828" stroke="#1fc8a0" stroke-width="1.8"/></svg>
<svg style="left:2317.0px;top:1559.2px;" width="12" height="12"><path d="M1 0 L11.5 6 L1 12Z" fill="#c4c4c4"/></svg>
<div class="a" style="left:2354.0px;top:1555.2px;width:20.0px;height:20.0px;background:#d4d4d4;border-radius:3px;"></div><svg style="left:2354.0px;top:1555.2px;" width="20" height="20"><path d="M4 10 L8.5 14.5 L16.5 5" fill="none" stroke="#1d1d1d" stroke-width="3"/></svg>
<svg style="left:2390.2px;top:1551.2px;" width="28" height="28"><rect x="1.2" y="1.2" width="25.6" height="6.2" fill="none" stroke="#d8d8d8" stroke-width="2.2"/><path d="M3.5 7.5 V26.5 H24.5 V7.5" fill="none" stroke="#d8d8d8" stroke-width="2.2"/><rect x="10.5" y="12.5" width="7" height="3.4" rx="1.4" fill="#d8d8d8"/></svg>
<div class="t" style="left:2432.5px;top:1553.2px;color:#cdcdcd;">Lights</div>
<svg style="left:2686.2px;top:1554.7px;" width="27" height="18"><path d="M0.5 9 C6 -1.5 21 -1.5 26.5 9 C21 19.5 6 19.5 0.5 9Z" fill="#e6e6e6"/><circle cx="13.5" cy="9" r="6.3" fill="#2b2b2b"/><circle cx="13.5" cy="9" r="3" fill="#e6e6e6"/></svg>
<svg style="left:2317.0px;top:1599.0px;" width="12" height="12"><path d="M1 0 L11.5 6 L1 12Z" fill="#c4c4c4"/></svg>
<div class="a" style="left:2354.0px;top:1595.0px;width:20.0px;height:20.0px;background:#d4d4d4;border-radius:3px;"></div><svg style="left:2354.0px;top:1595.0px;" width="20" height="20"><path d="M4 10 L8.5 14.5 L16.5 5" fill="none" stroke="#1d1d1d" stroke-width="3"/></svg>
<svg style="left:2390.2px;top:1591.0px;" width="28" height="28"><rect x="1.2" y="1.2" width="25.6" height="6.2" fill="none" stroke="#d8d8d8" stroke-width="2.2"/><path d="M3.5 7.5 V26.5 H24.5 V7.5" fill="none" stroke="#d8d8d8" stroke-width="2.2"/><rect x="10.5" y="12.5" width="7" height="3.4" rx="1.4" fill="#d8d8d8"/></svg>
<div class="t" style="left:2432.5px;top:1593.0px;color:#cdcdcd;">Backdrop</div>
<svg style="left:2686.2px;top:1594.5px;" width="27" height="18"><path d="M0.5 9 C6 -1.5 21 -1.5 26.5 9 C21 19.5 6 19.5 0.5 9Z" fill="#e6e6e6"/><circle cx="13.5" cy="9" r="6.3" fill="#2b2b2b"/><circle cx="13.5" cy="9" r="3" fill="#e6e6e6"/></svg>
<svg style="left:2317.0px;top:1639.0px;" width="12" height="12"><path d="M1 0 L11.5 6 L1 12Z" fill="#c4c4c4"/></svg>
<div class="a" style="left:2354.0px;top:1635.0px;width:20.0px;height:20.0px;background:#d4d4d4;border-radius:3px;"></div><svg style="left:2354.0px;top:1635.0px;" width="20" height="20"><path d="M4 10 L8.5 14.5 L16.5 5" fill="none" stroke="#1d1d1d" stroke-width="3"/></svg>
<svg style="left:2390.2px;top:1631.0px;" width="28" height="28"><rect x="1.2" y="1.2" width="25.6" height="6.2" fill="none" stroke="#d8d8d8" stroke-width="2.2"/><path d="M3.5 7.5 V26.5 H24.5 V7.5" fill="none" stroke="#d8d8d8" stroke-width="2.2"/><rect x="10.5" y="12.5" width="7" height="3.4" rx="1.4" fill="#d8d8d8"/></svg>
<div class="t" style="left:2432.5px;top:1633.0px;color:#cdcdcd;">Camera</div>
<svg style="left:2686.2px;top:1634.5px;" width="27" height="18"><path d="M0.5 9 C6 -1.5 21 -1.5 26.5 9 C21 19.5 6 19.5 0.5 9Z" fill="#e6e6e6"/><circle cx="13.5" cy="9" r="6.3" fill="#2b2b2b"/><circle cx="13.5" cy="9" r="3" fill="#e6e6e6"/></svg>
<svg style="left:2542.0px;top:1549.0px;" width="30" height="34"><path d="M12.5 1 C19 1 24 5.5 24 12 C24 16.5 21 19 19.5 22 H5.5 C4 19 1 16.5 1 12 C1 5.5 6 1 12.5 1Z" fill="#e2924b"/><path d="M7 24 H18 M7 27.5 H18 M10 31 H15" stroke="#e2924b" stroke-width="2"/><path d="M8 12.5 L10.5 21 M17 12.5 L14.5 21 M8 13.5 H17" stroke="#2e2e2e" stroke-width="1.6" fill="none"/></svg>
<div class="a" style="left:2560.0px;top:1562.5px;width:19.5px;height:19.5px;background:#0d0d0d;border-radius:10px;"></div>
<div class="t" style="left:2269.8px;width:600px;text-align:center;top:1563.6px;color:#fff;font-size:16px;line-height:19px;letter-spacing:0px;text-shadow:none;">3</div>
<svg style="left:2578.0px;top:1590.5px;" width="28" height="28"><path d="M3 3 H25 L14 25Z" fill="none" stroke="#e2924b" stroke-width="5" stroke-linejoin="round"/></svg>
<div class="a" style="left:2556.0px;top:1626.2px;width:40.2px;height:36.3px;background:#4f4f4f;border-radius:8px;box-shadow:inset 0 0 0 1.5px #626262;"></div>
<svg style="left:2561.0px;top:1629.0px;" width="31" height="31"><g transform="scale(1.0333333333333334)"><path d="M2.5 11 A6 6 0 0 1 13 7 A7.4 7.4 0 1 1 25 15.5 H4 A6 6 0 0 1 2.5 11Z" fill="#e2924b"/><circle cx="20" cy="9" r="2.4" fill="#333"/><circle cx="8" cy="11" r="1.8" fill="#333"/><path d="M7 17.5 H21 V27.5 H7 Z M22 22.5 L28.5 18.5 V27 Z M7 20 H3.5 V24 H7Z" fill="#e2924b"/></g></svg>
</div>
</body></html>
